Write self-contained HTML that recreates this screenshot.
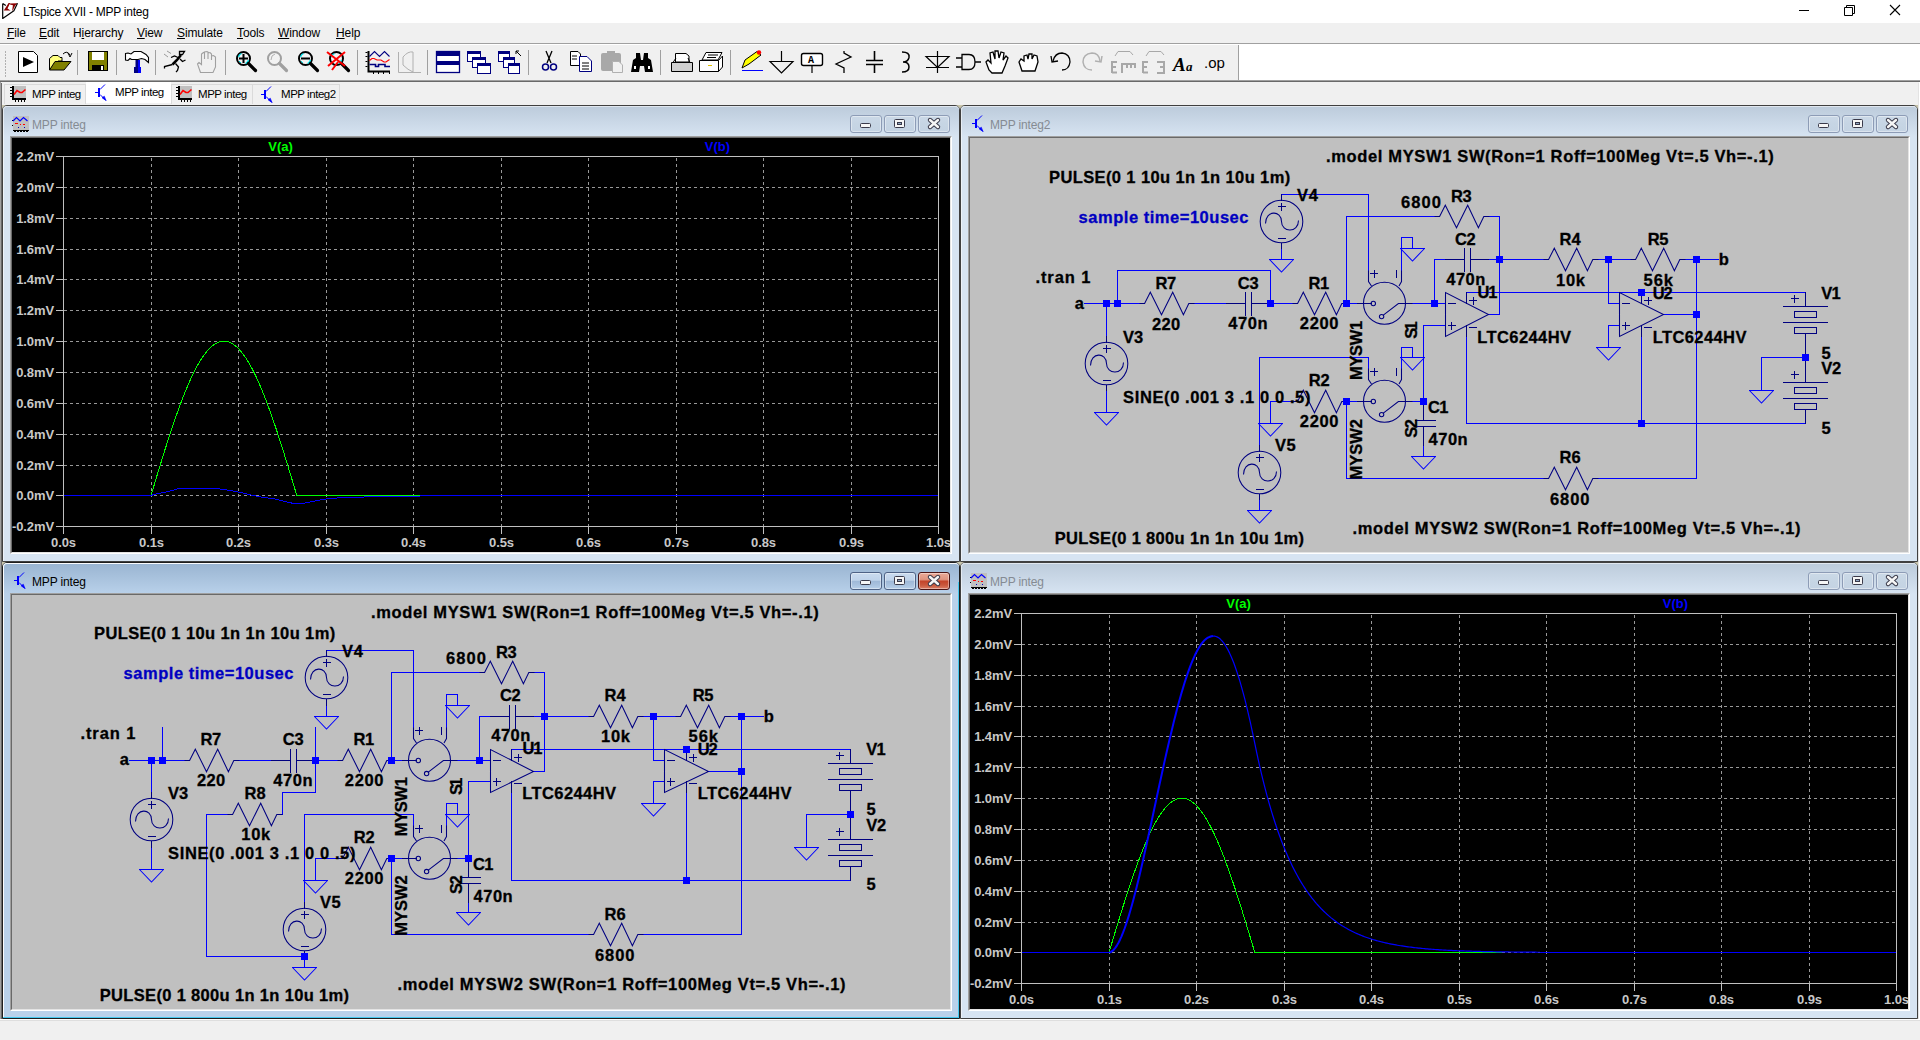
<!DOCTYPE html><html><head><meta charset="utf-8"><style>html,body{margin:0;padding:0;width:1920px;height:1040px;overflow:hidden;background:#f0f0f0;position:relative;font-family:"Liberation Sans",sans-serif}</style></head><body><div style="position:absolute;left:0;top:0;width:1920px;height:23px;background:#fff"></div><svg style="position:absolute;left:0;top:0" width="22" height="22"><path d="M8.6 3 L10.2 3 L7.5 8.6 L10.6 10.6 L3.8 10.6 Z" fill="#8b0000"/><path d="M10 3.6 L17.4 3.2 L15.2 5.6 L12.8 10.4 L12.2 10.4 L12.9 5.2 L10 4.6 Z" fill="#8b0000"/><path d="M2.7 3.4 V18.4 L13.9 10.7 L17.5 3.3 M2.7 3.6 L5.8 5.6" stroke="#000" stroke-width="1.2" fill="none" stroke-linejoin="round"/></svg><div style="position:absolute;left:23px;top:5px;font:12px 'Liberation Sans', sans-serif;color:#000;white-space:pre;letter-spacing:-0.25px">LTspice XVII - MPP integ</div><svg style="position:absolute;left:1790px;top:0" width="130" height="23"><path d="M9 10.5 H19" stroke="#000" stroke-width="1"/><path d="M54.5 7.5 H62.5 V15.5 H54.5 Z M56.5 7.5 V5.5 H64.5 V13.5 H62.5" stroke="#000" fill="none" stroke-width="1"/><path d="M100 5 L110 15 M110 5 L100 15" stroke="#000" stroke-width="1.1"/></svg><div style="position:absolute;left:0;top:23px;width:1920px;height:20px;background:#f0f0f0"></div><div style="position:absolute;left:7px;top:26px;font:12px 'Liberation Sans', sans-serif;color:#000;white-space:pre;letter-spacing:-0.1px"><u style="text-underline-offset:1px">F</u>ile</div><div style="position:absolute;left:39px;top:26px;font:12px 'Liberation Sans', sans-serif;color:#000;white-space:pre;letter-spacing:-0.1px"><u style="text-underline-offset:1px">E</u>dit</div><div style="position:absolute;left:73px;top:26px;font:12px 'Liberation Sans', sans-serif;color:#000;white-space:pre;letter-spacing:-0.1px">H<u style="text-underline-offset:1px">i</u>erarchy</div><div style="position:absolute;left:137px;top:26px;font:12px 'Liberation Sans', sans-serif;color:#000;white-space:pre;letter-spacing:-0.1px"><u style="text-underline-offset:1px">V</u>iew</div><div style="position:absolute;left:177px;top:26px;font:12px 'Liberation Sans', sans-serif;color:#000;white-space:pre;letter-spacing:-0.1px"><u style="text-underline-offset:1px">S</u>imulate</div><div style="position:absolute;left:237px;top:26px;font:12px 'Liberation Sans', sans-serif;color:#000;white-space:pre;letter-spacing:-0.1px"><u style="text-underline-offset:1px">T</u>ools</div><div style="position:absolute;left:278px;top:26px;font:12px 'Liberation Sans', sans-serif;color:#000;white-space:pre;letter-spacing:-0.1px"><u style="text-underline-offset:1px">W</u>indow</div><div style="position:absolute;left:336px;top:26px;font:12px 'Liberation Sans', sans-serif;color:#000;white-space:pre;letter-spacing:-0.1px"><u style="text-underline-offset:1px">H</u>elp</div><div style="position:absolute;left:0;top:43px;width:1920px;height:1px;background:#a0a0a0"></div><div style="position:absolute;left:0;top:44px;width:1920px;height:36px;background:#fff"></div><div style="position:absolute;left:0;top:45px;width:1238px;height:35px;background:#f0f0f0"></div><div style="position:absolute;left:1238px;top:45px;width:1px;height:35px;background:#a0a0a0"></div><div style="position:absolute;left:0;top:80px;width:1920px;height:1px;background:#a0a0a0"></div><div style="position:absolute;left:0;top:81px;width:1920px;height:1px;background:#696969"></div><svg style="position:absolute;left:0;top:0" width="1240" height="81"><rect x="5" y="51" width="1" height="2" fill="#b0b0b0"/><rect x="5" y="54" width="1" height="2" fill="#b0b0b0"/><rect x="5" y="57" width="1" height="2" fill="#b0b0b0"/><rect x="5" y="60" width="1" height="2" fill="#b0b0b0"/><rect x="5" y="63" width="1" height="2" fill="#b0b0b0"/><rect x="5" y="66" width="1" height="2" fill="#b0b0b0"/><rect x="5" y="69" width="1" height="2" fill="#b0b0b0"/><rect x="5" y="72" width="1" height="2" fill="#b0b0b0"/><rect x="5" y="75" width="1" height="2" fill="#b0b0b0"/><rect x="77" y="50" width="1" height="25" fill="#a0a0a0"/><rect x="116" y="50" width="1" height="25" fill="#a0a0a0"/><rect x="155" y="50" width="1" height="25" fill="#a0a0a0"/><rect x="225" y="50" width="1" height="25" fill="#a0a0a0"/><rect x="357" y="50" width="1" height="25" fill="#a0a0a0"/><rect x="427" y="50" width="1" height="25" fill="#a0a0a0"/><rect x="528" y="50" width="1" height="25" fill="#a0a0a0"/><rect x="660" y="50" width="1" height="25" fill="#a0a0a0"/><rect x="730" y="50" width="1" height="25" fill="#a0a0a0"/><path d="M18.5 51.5 H33.5 L37.5 55.5 V72.5 H18.5 Z" fill="#fff" stroke="#000"/><path d="M23 57 L34 62 L23 67 Z" fill="#000"/><path d="M49.5 58.5 L53 55.5 H58 L60 57.5 H62 V61 H58 L49.5 70 Z" fill="#ffff80" stroke="#000"/><path d="M49.5 70 L55 61.5 H71 L64 70 Z" fill="#808000" stroke="#000"/><path d="M63 54 Q67 50 70 55" stroke="#000" fill="none"/><path d="M68 53 L70 57 L72 53" stroke="#000" fill="none"/><rect x="88.5" y="51.5" width="19" height="19" fill="#808000" stroke="#000"/><rect x="92" y="52" width="12" height="8" fill="#fff"/><rect x="92" y="65" width="12" height="6" fill="#000"/><rect x="101" y="66" width="2" height="4" fill="#fff"/><path d="M125.5 53.5 L128 53 L131 54 L134 51.5 L141 51.5 L146 54.5 L148.5 57.5 L148.5 62.5 L145 59.5 L141.5 58.5 L138 59.5 L131.5 59.5 L130 58.5 L128 60.5 L125.5 60 Z" fill="#fff" stroke="#000" stroke-width="1.1"/><rect x="135.5" y="60" width="2.5" height="7" fill="#000080"/><rect x="138" y="60" width="2" height="7" fill="#0000ff"/><rect x="134" y="67" width="4" height="6" fill="#000080"/><rect x="138" y="67" width="3" height="6" fill="#0000ff"/><path d="M179.5 51.5 H184.5 L182.5 54.5 H179.5 Z" fill="#fff" stroke="#000" stroke-width="1.3"/><path d="M181 55 L177 60 L172.5 64.5" stroke="#000" stroke-width="2.6" fill="none"/><path d="M178 57.5 L174.5 56 L171 57.5 M180 59 L182.5 61.5 L185.5 60 M172.5 64.5 L164.5 66.5 V68.5 M175.5 63.5 L178.5 67 L177.5 70.5 L176 72" stroke="#000" stroke-width="1.3" fill="none"/><path d="M164 54 L168 57 M167 51 L171 53.5" stroke="#909090" stroke-width="0.9"/><path d="M200.5 72.5 L197.5 64 L199 62.5 L201.5 64.5 V54 L203.5 52.5 L204.5 53 V59 V52 L207 51.5 L208 52 V59 V53 L210 52.5 L211.5 54 V60 V56 L213.5 55.5 L215.5 57 V67 L213 72.5 Z" fill="#f0f0f0" stroke="#a0a0a0" stroke-width="1.1"/><circle cx="243.5" cy="58.5" r="6.5" fill="#f2f2f2" stroke="#000" stroke-width="2"/><path d="M238.5 57.0 A5 5 0 0 1 241.5 53.5" stroke="#00e8f0" stroke-width="1.3" fill="none"/><path d="M248.5 60.0 A5 5 0 0 1 245.5 63.5" stroke="#00e8f0" stroke-width="1.3" fill="none"/><path d="M248.5 63.5 L255.5 70.5" stroke="#000" stroke-width="3.2" stroke-linecap="round"/><path d="M239 58.5 H248 M243.5 54 V63" stroke="#000" stroke-width="2"/><path d="M239 61 L241 63" stroke="#00e0e0"/><circle cx="274.5" cy="58.5" r="6.5" fill="#f2f2f2" stroke="#a0a0a0" stroke-width="2"/><path d="M279.5 63.5 L286.5 70.5" stroke="#a0a0a0" stroke-width="3.2" stroke-linecap="round"/><path d="M271 60 Q271 55 275 54" stroke="#b0b0b0" fill="none"/><circle cx="305.5" cy="58.5" r="6.5" fill="#f2f2f2" stroke="#000" stroke-width="2"/><path d="M300.5 57.0 A5 5 0 0 1 303.5 53.5" stroke="#00e8f0" stroke-width="1.3" fill="none"/><path d="M310.5 60.0 A5 5 0 0 1 307.5 63.5" stroke="#00e8f0" stroke-width="1.3" fill="none"/><path d="M310.5 63.5 L317.5 70.5" stroke="#000" stroke-width="3.2" stroke-linecap="round"/><path d="M301 58.5 H310" stroke="#000" stroke-width="2"/><path d="M301 61 L303 63" stroke="#00e0e0"/><circle cx="336.5" cy="58.5" r="6.5" fill="#f2f2f2" stroke="#000" stroke-width="2"/><path d="M331.5 57.0 A5 5 0 0 1 334.5 53.5" stroke="#00e8f0" stroke-width="1.3" fill="none"/><path d="M341.5 60.0 A5 5 0 0 1 338.5 63.5" stroke="#00e8f0" stroke-width="1.3" fill="none"/><path d="M341.5 63.5 L348.5 70.5" stroke="#000" stroke-width="3.2" stroke-linecap="round"/><path d="M327 52 L345 66 M345 52 L328 66 M332 70 L338 62" stroke="#ff0000" stroke-width="2"/><path d="M368.5 51 V71.5 H390" stroke="#000" stroke-width="2" fill="none"/><rect x="365.5" y="52" width="2" height="1" fill="#000"/><rect x="365.5" y="56" width="2" height="1" fill="#000"/><rect x="365.5" y="61" width="2" height="1" fill="#000"/><rect x="365.5" y="66" width="2" height="1" fill="#000"/><rect x="373" y="72" width="1" height="2" fill="#000"/><rect x="378" y="72" width="1" height="2" fill="#000"/><rect x="383" y="72" width="1" height="2" fill="#000"/><rect x="389" y="72" width="1" height="2" fill="#000"/><path d="M369.5 56.5 L374.5 51.5 L379.5 56.5 L384.5 51.5 L389.5 56.5" stroke="#000080" stroke-width="1.1" fill="none"/><path d="M369.5 60.5 L372 58.5 L374 58.5 L377 60 L381 60 L384 62 L386 62 L389.5 59.5" stroke="#ff0000" stroke-width="1.1" fill="none"/><path d="M369.5 64.5 H375.5 V66.5 H378.5 V64.5 H385 V66.5 H390" stroke="#000080" stroke-width="1.6" fill="none"/><path d="M398.5 52 V72.5 H421" stroke="#b0b0b0" fill="none"/><path d="M403 57 Q408 51 413 52 L413 72 Q408 70 403 65 Z" stroke="#b0b0b0" fill="none"/><rect x="436.5" y="51.5" width="23" height="21" fill="#fff" stroke="#000080" stroke-width="1.3"/><rect x="437" y="52" width="22" height="4" fill="#000080"/><rect x="437" y="61" width="22" height="4" fill="#000080"/><rect x="467.5" y="51.5" width="13" height="10" fill="#fff" stroke="#000080"/><rect x="467" y="51" width="14" height="3" fill="#000080"/><rect x="472.5" y="57.5" width="13" height="10" fill="#fff" stroke="#000080"/><rect x="472" y="57" width="14" height="3" fill="#000080"/><rect x="477.5" y="63.5" width="13" height="10" fill="#fff" stroke="#000080"/><rect x="477" y="63" width="14" height="3" fill="#000080"/><rect x="498.5" y="51.5" width="11" height="10" fill="#fff" stroke="#000080"/><rect x="498" y="51" width="12" height="3" fill="#000080"/><rect x="503.5" y="57.5" width="11" height="10" fill="#fff" stroke="#000080"/><rect x="503" y="57" width="12" height="3" fill="#000080"/><rect x="508.5" y="63.5" width="11" height="10" fill="#fff" stroke="#000080"/><rect x="508" y="63" width="12" height="3" fill="#000080"/><path d="M516 51 L521 56 M516 51 V54 M516 51 H519" stroke="#000" fill="none"/><path d="M546 51 L551 63 M552 51 L547 63" stroke="#000" stroke-width="1.3"/><circle cx="545.5" cy="67" r="3" fill="none" stroke="#000080" stroke-width="1.5"/><circle cx="553.5" cy="67" r="3" fill="none" stroke="#000080" stroke-width="1.5"/><path d="M570.5 51.5 H578 L580.5 54 V65.5 H570.5 Z" fill="#fff" stroke="#000"/><path d="M579.5 56.5 H587 L591.5 61 V71.5 H579.5 Z" fill="#fff" stroke="#000080"/><path d="M572 56 H577 M572 59 H577 M582 63 H589 M582 66 H589 M582 69 H589" stroke="#000"/><rect x="601" y="53" width="20" height="18" rx="2" fill="#a8a8a8"/><rect x="607" y="51" width="8" height="3" fill="#a8a8a8"/><path d="M612.5 61.5 H619 L622.5 65 V72.5 H612.5 Z" fill="#f0f0f0" stroke="#b0b0b0"/><path d="M631 72 L633 60 L636 58 L636 53 L640 53 L641 60 L643 60 L644 53 L648 53 L648 58 L651 60 L653 72 L645 72 L644 66 L640 66 L639 72 Z" fill="#000"/><rect x="634" y="66" width="2" height="3" fill="#fff"/><rect x="648" y="66" width="2" height="3" fill="#fff"/><path d="M675.5 53.5 H686 L689 56 V62 H675.5 Z" fill="#fff" stroke="#000"/><path d="M671.5 62.5 H692.5 V71.5 H671.5 Z" fill="#d0d0d0" stroke="#000"/><path d="M673 62.5 L676 58 M690 62.5 L688 58" stroke="#000"/><path d="M702 60 L706 52.5 H722 L718 60 Z" fill="#fff" stroke="#000"/><path d="M708 55 H718 M707 57.5 H716" stroke="#000"/><path d="M699.5 60.5 H718.5 L722.5 56 V67 L718.5 71.5 H699.5 Z M718.5 60.5 V71.5" fill="#fff" stroke="#000"/><rect x="708" y="65" width="4" height="1" fill="#e0c000"/><path d="M742 68 L745 60 L757 51.5 L761 55 L749 64 Z" fill="#ffff00" stroke="#000"/><circle cx="759" cy="52.5" r="2.2" fill="#ff0000"/><path d="M742 70.5 H763" stroke="#0000ff"/><path d="M781.5 51 V61 M770 61.5 H793 L781.5 73 Z" stroke="#000" stroke-width="1.2" fill="none"/><rect x="801.5" y="53.5" width="21" height="12" rx="2" fill="#fff" stroke="#000" stroke-width="1.4"/><path d="M812 65 V73" stroke="#000" stroke-width="1.2"/><text x="808" y="63" font-family="Liberation Mono" font-weight="bold" font-size="10" fill="#000">A</text><path d="M844 51 V53 L851 57 L836 64 L844 68 V73" stroke="#000" stroke-width="1.3" fill="none"/><path d="M874.5 51 V60 M866 60.5 H883 M866 64.5 H883 M874.5 65 V73" stroke="#000" stroke-width="1.6" fill="none"/><path d="M902 52 Q910 52 909 57.5 Q908 62 903 62 Q909 62 909 67 Q909 72 902 72" stroke="#000" stroke-width="1.5" fill="none"/><path d="M937.5 51 V73 M926 56.5 H949 L937.5 67.5 Z M926 67.5 H949" stroke="#000" stroke-width="1.2" fill="none"/><path d="M956 58 H962 M956 67 H962 M962 54.5 H969 Q975 54.5 975 62 Q975 69.5 969 69.5 H962 Z M975 62 H981" stroke="#000" stroke-width="1.3" fill="none"/><path d="M989 70 L986 62 L988 60 L991 63 L990 53 L993 52 L995 59 L995 51 L998 51 L999 58 L1001 52 L1004 53 L1003 60 L1006 56 L1008 58 L1005 66 L1002 73 L992 73 Z" fill="#fff" stroke="#000" stroke-width="1.3"/><path d="M1022 71 L1019 62 L1021 59 L1024 61 L1024 56 L1027 55 L1028 59 L1029 54 L1032 54 L1032 59 L1034 55 L1037 56 L1038 62 L1035 71 Z" fill="#fff" stroke="#000" stroke-width="1.3"/><path d="M1053 61 Q1055 53 1062 53 Q1070 54 1070 62 Q1069 70 1062 70" stroke="#000" stroke-width="1.3" fill="none"/><path d="M1051 56 L1052 62 L1058 61" stroke="#000" stroke-width="1.3" fill="none"/><path d="M1100 61 Q1099 53 1092 53 Q1083 54 1083 62 Q1084 70 1092 70" stroke="#b0b0b0" stroke-width="1.5" fill="none"/><path d="M1102 56 L1101 62 L1095 61" stroke="#b0b0b0" stroke-width="1.5" fill="none"/><path d="M1112 73 V62 H1117 M1112 67 H1116 M1112 72.5 H1117 M1122 73 V64 H1135 V68 M1127 64 V68 M1131 64 V68" stroke="#a8a8a8" stroke-width="2" fill="none"/><path d="M1115 56 L1118 51.5 H1130 L1133 55" stroke="#a8a8a8" fill="none"/><path d="M1143 73 V62 H1148 M1143 67 H1147 M1143 72.5 H1148 M1157 62 H1164 V73 H1157 M1160 67 H1164" stroke="#a8a8a8" stroke-width="2" fill="none"/><path d="M1146 56 L1149 51.5 H1161 L1164 55" stroke="#a8a8a8" fill="none"/><text x="1173" y="71" font-family="Liberation Serif" font-style="italic" font-weight="bold" font-size="19" fill="#000">A</text><text x="1186" y="71" font-family="Liberation Serif" font-style="italic" font-weight="bold" font-size="13" fill="#000">a</text><text x="1204" y="68" font-family="Liberation Sans" font-size="15" fill="#000">.op</text></svg><div style="position:absolute;left:0;top:82px;width:1920px;height:23px;background:#f0f0f0"></div><div style="position:absolute;left:4px;top:84px;width:80px;height:19px;border:1px solid #dadada;border-bottom:none;background:#f0f0f0"></div><div style="position:absolute;left:86px;top:82px;width:85px;height:21px;background:#fff"></div><div style="position:absolute;left:171px;top:84px;width:80px;height:19px;border:1px solid #dadada;border-bottom:none;background:#f0f0f0"></div><div style="position:absolute;left:252px;top:84px;width:86px;height:19px;border:1px solid #dadada;border-bottom:none;background:#f0f0f0"></div><svg style="position:absolute;left:10px;top:86px" width="18" height="17" shape-rendering="crispEdges"><rect x="4" y="0" width="12" height="12" fill="#c0c0c0"/><rect x="2" y="0" width="2" height="14" fill="#000"/><rect x="2" y="12" width="14" height="2" fill="#000"/><rect x="0" y="1" width="2" height="1" fill="#000"/><rect x="0" y="4" width="2" height="1" fill="#000"/><rect x="0" y="7" width="2" height="1" fill="#000"/><rect x="0" y="10" width="2" height="1" fill="#000"/><rect x="5" y="14" width="1" height="2" fill="#000"/><rect x="8" y="14" width="1" height="2" fill="#000"/><rect x="11" y="14" width="1" height="2" fill="#000"/><rect x="14" y="14" width="1" height="2" fill="#000"/></svg><svg style="position:absolute;left:10px;top:86px" width="18" height="17"><path d="M4 8.5 L7 4.5 L10 6.5 L12 6.5 L15.5 3.5" stroke="#ff0000" stroke-width="1.6" fill="none"/></svg><svg style="position:absolute;left:95px;top:84px" width="14" height="18" shape-rendering="crispEdges"><rect x="0" y="8" width="3" height="1" fill="#0000ff"/><rect x="3" y="4" width="2" height="9" fill="#0000ff"/></svg><svg style="position:absolute;left:95px;top:84px" width="14" height="18"><path d="M5 5.5 L10 0.5" stroke="#0000ff" stroke-width="1"/><path d="M5 10.5 L11 16.5" stroke="#0000ff" stroke-width="1"/><path d="M7 13.8 L11 16.5 L9.3 12.2 Z" fill="#0000ff" stroke="#0000ff" stroke-width="0.6"/></svg><svg style="position:absolute;left:176px;top:86px" width="18" height="17" shape-rendering="crispEdges"><rect x="4" y="0" width="12" height="12" fill="#c0c0c0"/><rect x="2" y="0" width="2" height="14" fill="#000"/><rect x="2" y="12" width="14" height="2" fill="#000"/><rect x="0" y="1" width="2" height="1" fill="#000"/><rect x="0" y="4" width="2" height="1" fill="#000"/><rect x="0" y="7" width="2" height="1" fill="#000"/><rect x="0" y="10" width="2" height="1" fill="#000"/><rect x="5" y="14" width="1" height="2" fill="#000"/><rect x="8" y="14" width="1" height="2" fill="#000"/><rect x="11" y="14" width="1" height="2" fill="#000"/><rect x="14" y="14" width="1" height="2" fill="#000"/></svg><svg style="position:absolute;left:176px;top:86px" width="18" height="17"><path d="M4 8.5 L7 4.5 L10 6.5 L12 6.5 L15.5 3.5" stroke="#ff0000" stroke-width="1.6" fill="none"/></svg><svg style="position:absolute;left:261px;top:86px" width="14" height="18" shape-rendering="crispEdges"><rect x="0" y="8" width="3" height="1" fill="#0000ff"/><rect x="3" y="4" width="2" height="9" fill="#0000ff"/></svg><svg style="position:absolute;left:261px;top:86px" width="14" height="18"><path d="M5 5.5 L10 0.5" stroke="#0000ff" stroke-width="1"/><path d="M5 10.5 L11 16.5" stroke="#0000ff" stroke-width="1"/><path d="M7 13.8 L11 16.5 L9.3 12.2 Z" fill="#0000ff" stroke="#0000ff" stroke-width="0.6"/></svg><div style="position:absolute;left:32px;top:88px;font:11.5px 'Liberation Sans', sans-serif;color:#000;white-space:pre;letter-spacing:-0.45px">MPP integ</div><div style="position:absolute;left:115px;top:86px;font:11.5px 'Liberation Sans', sans-serif;color:#000;white-space:pre;letter-spacing:-0.45px">MPP integ</div><div style="position:absolute;left:198px;top:88px;font:11.5px 'Liberation Sans', sans-serif;color:#000;white-space:pre;letter-spacing:-0.45px">MPP integ</div><div style="position:absolute;left:281px;top:88px;font:11.5px 'Liberation Sans', sans-serif;color:#000;white-space:pre;letter-spacing:-0.45px">MPP integ2</div><div style="position:absolute;left:2px;top:105px;width:1916px;height:914px;background:#c9c5ab"></div><div style="position:absolute;left:0;top:82px;width:1px;height:937px;background:#a0a0a0"></div><div style="position:absolute;left:1px;top:83px;width:1px;height:936px;background:#696969"></div><div style="position:absolute;left:1918px;top:83px;width:1px;height:936px;background:#e3e3e3"></div><div style="position:absolute;left:1919px;top:82px;width:1px;height:937px;background:#fff"></div><div style="position:absolute;left:2px;top:105px;width:958px;height:457px;overflow:hidden"><div style="position:absolute;left:0;top:0;width:956px;height:455px;border:1px solid #404040;border-radius:5px 5px 0 0;background:#d7e4f2"></div><div style="position:absolute;left:1px;top:1px;width:956px;height:31px;border-radius:4px 4px 0 0;background:linear-gradient(#bccbdb,#d7e4f2)"></div><div style="position:absolute;left:1px;top:1px;width:955px;height:454px;border-left:1px solid rgba(255,255,255,0.55);border-top:1px solid rgba(255,255,255,0.55);border-radius:4px 4px 0 0"></div><svg style="position:absolute;left:10px;top:11px" width="17" height="17" shape-rendering="crispEdges"><rect x="1" y="0" width="16" height="15" fill="#c0c0c0"/><rect x="3" y="7" width="3" height="1" fill="#ff0000"/><rect x="8" y="8" width="1" height="1" fill="#ff0000"/><rect x="11" y="8" width="2" height="1" fill="#ff0000"/><rect x="0" y="4" width="1" height="1" fill="#000"/><rect x="0" y="9" width="1" height="1" fill="#000"/><rect x="6" y="11" width="1" height="1" fill="#0000c0"/><rect x="12" y="11" width="1" height="1" fill="#0000c0"/><rect x="1" y="14" width="16" height="1" fill="#000"/><rect x="2" y="15" width="2" height="1" fill="#000"/><rect x="5" y="15" width="2" height="1" fill="#000"/><rect x="8" y="15" width="2" height="1" fill="#000"/><rect x="11" y="15" width="2" height="1" fill="#000"/><rect x="14" y="15" width="2" height="1" fill="#000"/></svg><svg style="position:absolute;left:10px;top:11px" width="17" height="17"><path d="M1 5 L4.5 1.5 L8 5 L11.5 1.5 L15.5 5" stroke="#0000ff" stroke-width="1.2" fill="none"/></svg><div style="position:absolute;left:30px;top:13px;font:12px 'Liberation Sans', sans-serif;color:#858b93;white-space:pre;letter-spacing:-0.15px">MPP integ</div><div style="position:absolute;left:848px;top:10px;width:30px;height:16px;border:1px solid #8d9cb6;border-radius:3px;background:linear-gradient(#cbd9e7 0%, #c6d5e4 50%, #c4d3e3 100%);box-shadow:inset 0 0 0 1px rgba(255,255,255,0.4)"></div><div style="position:absolute;left:882px;top:10px;width:30px;height:16px;border:1px solid #8d9cb6;border-radius:3px;background:linear-gradient(#cbd9e7 0%, #c6d5e4 50%, #c4d3e3 100%);box-shadow:inset 0 0 0 1px rgba(255,255,255,0.4)"></div><div style="position:absolute;left:916px;top:10px;width:30px;height:16px;border:1px solid #8d9cb6;border-radius:3px;background:linear-gradient(#cbd9e7 0%, #c6d5e4 50%, #c4d3e3 100%);box-shadow:inset 0 0 0 1px rgba(255,255,255,0.4)"></div><svg style="position:absolute;left:0;top:0" width="958" height="32"><rect x="858.5" y="18.5" width="10" height="4" rx="1" fill="#f6f6f6" stroke="#3a3a4a"/><rect x="892.5" y="14.5" width="10" height="8" rx="1" fill="#f6f6f6" stroke="#3a3a4a"/><rect x="895.5" y="17.5" width="4" height="2" fill="#8ea5c2" stroke="#3a3a4a"/><path d="M928 15.0 L936 22.0 M936 15.0 L928 22.0" stroke="#3a3a4a" stroke-width="4.4" stroke-linecap="round"/><path d="M928 15.0 L936 22.0 M936 15.0 L928 22.0" stroke="#f6f6f6" stroke-width="2.4" stroke-linecap="round"/></svg><div style="position:absolute;left:8px;top:31px;width:940px;height:416px;border-top:1px solid #a0a0a0;border-left:1px solid #a0a0a0;border-right:1px solid #fff;border-bottom:1px solid #fff"></div><div style="position:absolute;left:9px;top:32px;width:938px;height:414px;border-top:1px solid #696969;border-left:1px solid #696969;border-right:1px solid #e3e3e3;border-bottom:1px solid #e3e3e3"></div><div style="position:absolute;left:10px;top:33px;width:938px;height:414px;overflow:hidden"><svg style="position:absolute;left:0;top:0" width="938" height="414"><rect width="938" height="414" fill="#000"/><g shape-rendering="crispEdges"><line x1="52" y1="49.5" x2="926" y2="49.5" stroke="#989898" stroke-dasharray="3 3"/><line x1="52" y1="80.5" x2="926" y2="80.5" stroke="#989898" stroke-dasharray="3 3"/><line x1="52" y1="111.5" x2="926" y2="111.5" stroke="#989898" stroke-dasharray="3 3"/><line x1="52" y1="141.5" x2="926" y2="141.5" stroke="#989898" stroke-dasharray="3 3"/><line x1="52" y1="172.5" x2="926" y2="172.5" stroke="#989898" stroke-dasharray="3 3"/><line x1="52" y1="203.5" x2="926" y2="203.5" stroke="#989898" stroke-dasharray="3 3"/><line x1="52" y1="234.5" x2="926" y2="234.5" stroke="#989898" stroke-dasharray="3 3"/><line x1="52" y1="265.5" x2="926" y2="265.5" stroke="#989898" stroke-dasharray="3 3"/><line x1="52" y1="296.5" x2="926" y2="296.5" stroke="#989898" stroke-dasharray="3 3"/><line x1="52" y1="327.5" x2="926" y2="327.5" stroke="#989898" stroke-dasharray="3 3"/><line x1="52" y1="357.5" x2="926" y2="357.5" stroke="#989898" stroke-dasharray="3 3"/><line x1="139.5" y1="20" x2="139.5" y2="388" stroke="#989898" stroke-dasharray="3 3"/><line x1="226.5" y1="20" x2="226.5" y2="388" stroke="#989898" stroke-dasharray="3 3"/><line x1="314.5" y1="20" x2="314.5" y2="388" stroke="#989898" stroke-dasharray="3 3"/><line x1="401.5" y1="20" x2="401.5" y2="388" stroke="#989898" stroke-dasharray="3 3"/><line x1="489.5" y1="20" x2="489.5" y2="388" stroke="#989898" stroke-dasharray="3 3"/><line x1="576.5" y1="20" x2="576.5" y2="388" stroke="#989898" stroke-dasharray="3 3"/><line x1="664.5" y1="20" x2="664.5" y2="388" stroke="#989898" stroke-dasharray="3 3"/><line x1="751.5" y1="20" x2="751.5" y2="388" stroke="#989898" stroke-dasharray="3 3"/><line x1="839.5" y1="20" x2="839.5" y2="388" stroke="#989898" stroke-dasharray="3 3"/><rect x="51.5" y="18.5" width="875" height="370" fill="none" stroke="#c0c0c0"/><line x1="44" y1="18.5" x2="51" y2="18.5" stroke="#c0c0c0"/><line x1="44" y1="49.5" x2="51" y2="49.5" stroke="#c0c0c0"/><line x1="44" y1="80.5" x2="51" y2="80.5" stroke="#c0c0c0"/><line x1="44" y1="111.5" x2="51" y2="111.5" stroke="#c0c0c0"/><line x1="44" y1="141.5" x2="51" y2="141.5" stroke="#c0c0c0"/><line x1="44" y1="172.5" x2="51" y2="172.5" stroke="#c0c0c0"/><line x1="44" y1="203.5" x2="51" y2="203.5" stroke="#c0c0c0"/><line x1="44" y1="234.5" x2="51" y2="234.5" stroke="#c0c0c0"/><line x1="44" y1="265.5" x2="51" y2="265.5" stroke="#c0c0c0"/><line x1="44" y1="296.5" x2="51" y2="296.5" stroke="#c0c0c0"/><line x1="44" y1="327.5" x2="51" y2="327.5" stroke="#c0c0c0"/><line x1="44" y1="357.5" x2="51" y2="357.5" stroke="#c0c0c0"/><line x1="44" y1="388.5" x2="51" y2="388.5" stroke="#c0c0c0"/><line x1="51.5" y1="388" x2="51.5" y2="396" stroke="#c0c0c0"/><line x1="139.5" y1="388" x2="139.5" y2="396" stroke="#c0c0c0"/><line x1="226.5" y1="388" x2="226.5" y2="396" stroke="#c0c0c0"/><line x1="314.5" y1="388" x2="314.5" y2="396" stroke="#c0c0c0"/><line x1="401.5" y1="388" x2="401.5" y2="396" stroke="#c0c0c0"/><line x1="489.5" y1="388" x2="489.5" y2="396" stroke="#c0c0c0"/><line x1="576.5" y1="388" x2="576.5" y2="396" stroke="#c0c0c0"/><line x1="664.5" y1="388" x2="664.5" y2="396" stroke="#c0c0c0"/><line x1="751.5" y1="388" x2="751.5" y2="396" stroke="#c0c0c0"/><line x1="839.5" y1="388" x2="839.5" y2="396" stroke="#c0c0c0"/><line x1="926.5" y1="388" x2="926.5" y2="396" stroke="#c0c0c0"/></g><text x="42" y="23" text-anchor="end" font-family="Liberation Sans" font-weight="bold" font-size="13" fill="#c8c8c8" letter-spacing="-0.1">2.2mV</text><text x="42" y="54" text-anchor="end" font-family="Liberation Sans" font-weight="bold" font-size="13" fill="#c8c8c8" letter-spacing="-0.1">2.0mV</text><text x="42" y="85" text-anchor="end" font-family="Liberation Sans" font-weight="bold" font-size="13" fill="#c8c8c8" letter-spacing="-0.1">1.8mV</text><text x="42" y="116" text-anchor="end" font-family="Liberation Sans" font-weight="bold" font-size="13" fill="#c8c8c8" letter-spacing="-0.1">1.6mV</text><text x="42" y="146" text-anchor="end" font-family="Liberation Sans" font-weight="bold" font-size="13" fill="#c8c8c8" letter-spacing="-0.1">1.4mV</text><text x="42" y="177" text-anchor="end" font-family="Liberation Sans" font-weight="bold" font-size="13" fill="#c8c8c8" letter-spacing="-0.1">1.2mV</text><text x="42" y="208" text-anchor="end" font-family="Liberation Sans" font-weight="bold" font-size="13" fill="#c8c8c8" letter-spacing="-0.1">1.0mV</text><text x="42" y="239" text-anchor="end" font-family="Liberation Sans" font-weight="bold" font-size="13" fill="#c8c8c8" letter-spacing="-0.1">0.8mV</text><text x="42" y="270" text-anchor="end" font-family="Liberation Sans" font-weight="bold" font-size="13" fill="#c8c8c8" letter-spacing="-0.1">0.6mV</text><text x="42" y="301" text-anchor="end" font-family="Liberation Sans" font-weight="bold" font-size="13" fill="#c8c8c8" letter-spacing="-0.1">0.4mV</text><text x="42" y="332" text-anchor="end" font-family="Liberation Sans" font-weight="bold" font-size="13" fill="#c8c8c8" letter-spacing="-0.1">0.2mV</text><text x="42" y="362" text-anchor="end" font-family="Liberation Sans" font-weight="bold" font-size="13" fill="#c8c8c8" letter-spacing="-0.1">0.0mV</text><text x="42" y="393" text-anchor="end" font-family="Liberation Sans" font-weight="bold" font-size="13" fill="#c8c8c8" letter-spacing="-0.1">-0.2mV</text><text x="51.5" y="409" text-anchor="middle" font-family="Liberation Sans" font-weight="bold" font-size="13" fill="#c8c8c8" letter-spacing="-0.1">0.0s</text><text x="139.5" y="409" text-anchor="middle" font-family="Liberation Sans" font-weight="bold" font-size="13" fill="#c8c8c8" letter-spacing="-0.1">0.1s</text><text x="226.5" y="409" text-anchor="middle" font-family="Liberation Sans" font-weight="bold" font-size="13" fill="#c8c8c8" letter-spacing="-0.1">0.2s</text><text x="314.5" y="409" text-anchor="middle" font-family="Liberation Sans" font-weight="bold" font-size="13" fill="#c8c8c8" letter-spacing="-0.1">0.3s</text><text x="401.5" y="409" text-anchor="middle" font-family="Liberation Sans" font-weight="bold" font-size="13" fill="#c8c8c8" letter-spacing="-0.1">0.4s</text><text x="489.5" y="409" text-anchor="middle" font-family="Liberation Sans" font-weight="bold" font-size="13" fill="#c8c8c8" letter-spacing="-0.1">0.5s</text><text x="576.5" y="409" text-anchor="middle" font-family="Liberation Sans" font-weight="bold" font-size="13" fill="#c8c8c8" letter-spacing="-0.1">0.6s</text><text x="664.5" y="409" text-anchor="middle" font-family="Liberation Sans" font-weight="bold" font-size="13" fill="#c8c8c8" letter-spacing="-0.1">0.7s</text><text x="751.5" y="409" text-anchor="middle" font-family="Liberation Sans" font-weight="bold" font-size="13" fill="#c8c8c8" letter-spacing="-0.1">0.8s</text><text x="839.5" y="409" text-anchor="middle" font-family="Liberation Sans" font-weight="bold" font-size="13" fill="#c8c8c8" letter-spacing="-0.1">0.9s</text><text x="926.5" y="409" text-anchor="middle" font-family="Liberation Sans" font-weight="bold" font-size="13" fill="#c8c8c8" letter-spacing="-0.1">1.0s</text><text x="268.5" y="13" text-anchor="middle" font-family="Liberation Sans" font-weight="bold" font-size="13" fill="#00ff00">V(a)</text><text x="705.5" y="13" text-anchor="middle" font-family="Liberation Sans" font-weight="bold" font-size="13" fill="#0000ff">V(b)</text><polyline points="51.50,357.50 139.00,357.50 140.82,351.44 142.65,345.39 144.47,339.36 146.29,333.35 148.11,327.38 149.94,321.46 151.76,315.60 153.58,309.80 155.41,304.07 157.23,298.42 159.05,292.87 160.88,287.42 162.70,282.07 164.52,276.84 166.34,271.73 168.17,266.76 169.99,261.93 171.81,257.24 173.64,252.71 175.46,248.34 177.28,244.14 179.10,240.11 180.93,236.27 182.75,232.61 184.57,229.14 186.40,225.87 188.22,222.81 190.04,219.95 191.86,217.31 193.69,214.88 195.51,212.67 197.33,210.68 199.16,208.92 200.98,207.39 202.80,206.09 204.62,205.03 206.45,204.20 208.27,203.60 210.09,203.24 211.92,203.12 213.74,203.24 215.56,203.60 217.39,204.20 219.21,205.03 221.03,206.09 222.85,207.39 224.68,208.92 226.50,210.68 228.32,212.67 230.15,214.88 231.97,217.31 233.79,219.95 235.61,222.81 237.44,225.87 239.26,229.14 241.08,232.61 242.91,236.27 244.73,240.11 246.55,244.14 248.38,248.34 250.20,252.71 252.02,257.24 253.84,261.93 255.67,266.76 257.49,271.73 259.31,276.84 261.14,282.07 262.96,287.42 264.78,292.87 266.60,298.42 268.43,304.07 270.25,309.80 272.07,315.60 273.90,321.46 275.72,327.38 277.54,333.35 279.36,339.36 281.19,345.39 283.01,351.44 284.83,357.50 284.83,357.50 408.24,357.50" fill="none" stroke="#00ff00" stroke-width="1" stroke-linejoin="round" shape-rendering="crispEdges"/><polyline points="51.50,357.50 139.50,357.50" fill="none" stroke="#0000ff" stroke-width="1" stroke-linejoin="round" shape-rendering="crispEdges"/><polyline points="139.50,357.30 139.95,357.18 140.52,357.02 141.19,356.83 141.96,356.62 142.80,356.40 143.69,356.17 144.63,355.93 145.60,355.70 146.63,355.47 147.77,355.23 148.97,354.98 150.22,354.73 151.49,354.47 152.74,354.22 153.96,353.96 155.10,353.70 156.20,353.44 157.29,353.16 158.36,352.88 159.41,352.59 160.42,352.32 161.40,352.06 162.33,351.82 163.20,351.60 163.93,351.41 164.48,351.23 164.94,351.07 165.38,350.93 165.89,350.80 166.54,350.69 167.42,350.59 168.60,350.50 170.12,350.43 171.90,350.38 173.90,350.34 176.04,350.32 178.29,350.31 180.56,350.30 182.82,350.30 185.00,350.30 187.19,350.30 189.49,350.30 191.83,350.31 194.18,350.32 196.48,350.34 198.66,350.38 200.69,350.43 202.50,350.50 204.06,350.59 205.41,350.70 206.59,350.82 207.67,350.95 208.69,351.10 209.72,351.25 210.80,351.42 212.00,351.60 213.31,351.79 214.67,352.01 216.07,352.23 217.49,352.47 218.89,352.71 220.26,352.95 221.57,353.18 222.80,353.40 223.94,353.61 225.01,353.80 226.04,354.00 227.02,354.19 227.98,354.38 228.94,354.58 229.91,354.78 230.90,355.00 231.89,355.23 232.86,355.47 233.81,355.72 234.78,355.97 235.76,356.23 236.78,356.48 237.85,356.74 239.00,357.00 240.21,357.26 241.47,357.52 242.77,357.78 244.11,358.05 245.50,358.32 246.93,358.58 248.39,358.84 249.90,359.10 251.47,359.35 253.12,359.58 254.83,359.81 256.57,360.04 258.32,360.27 260.06,360.53 261.76,360.80 263.40,361.10 265.03,361.45 266.68,361.85 268.34,362.27 269.96,362.71 271.53,363.14 273.01,363.55 274.38,363.91 275.60,364.20 276.63,364.43 277.47,364.62 278.18,364.77 278.82,364.89 279.43,364.99 280.08,365.07 280.82,365.14 281.70,365.20 282.72,365.26 283.82,365.31 284.99,365.35 286.20,365.38 287.44,365.38 288.70,365.35 289.96,365.29 291.20,365.20 292.44,365.06 293.70,364.88 294.97,364.66 296.25,364.42 297.53,364.16 298.80,363.90 300.06,363.64 301.30,363.40 302.52,363.16 303.72,362.91 304.91,362.66 306.09,362.41 307.26,362.16 308.44,361.92 309.62,361.70 310.80,361.50 311.97,361.32 313.11,361.16 314.24,361.02 315.38,360.88 316.54,360.76 317.74,360.64 318.98,360.52 320.30,360.40 321.65,360.28 322.99,360.16 324.37,360.05 325.79,359.94 327.29,359.84 328.89,359.74 330.62,359.66 332.50,359.60 334.70,359.55 337.28,359.52 340.07,359.51 342.91,359.50 345.66,359.50 348.17,359.50 350.26,359.50 351.80,359.50" fill="none" stroke="#0000ff" stroke-width="1" stroke-linejoin="round" shape-rendering="crispEdges"/><polyline points="351.80,358.50 407.80,358.50" fill="none" stroke="#0000ff" stroke-width="1" stroke-linejoin="round" shape-rendering="crispEdges"/><polyline points="407.80,357.50 926.00,357.50" fill="none" stroke="#0000ff" stroke-width="1" stroke-linejoin="round" shape-rendering="crispEdges"/></svg></div></div><div style="position:absolute;left:960px;top:105px;width:958px;height:457px;overflow:hidden"><div style="position:absolute;left:0;top:0;width:956px;height:455px;border:1px solid #404040;border-radius:5px 5px 0 0;background:#d7e4f2"></div><div style="position:absolute;left:1px;top:1px;width:956px;height:31px;border-radius:4px 4px 0 0;background:linear-gradient(#bccbdb,#d7e4f2)"></div><div style="position:absolute;left:1px;top:1px;width:955px;height:454px;border-left:1px solid rgba(255,255,255,0.55);border-top:1px solid rgba(255,255,255,0.55);border-radius:4px 4px 0 0"></div><svg style="position:absolute;left:12px;top:10px" width="14" height="18" shape-rendering="crispEdges"><rect x="0" y="8" width="3" height="1" fill="#0000ff"/><rect x="3" y="4" width="2" height="9" fill="#0000ff"/></svg><svg style="position:absolute;left:12px;top:10px" width="14" height="18"><path d="M5 5.5 L10 0.5" stroke="#0000ff" stroke-width="1"/><path d="M5 10.5 L11 16.5" stroke="#0000ff" stroke-width="1"/><path d="M7 13.8 L11 16.5 L9.3 12.2 Z" fill="#0000ff" stroke="#0000ff" stroke-width="0.6"/></svg><div style="position:absolute;left:30px;top:13px;font:12px 'Liberation Sans', sans-serif;color:#858b93;white-space:pre;letter-spacing:-0.15px">MPP integ2</div><div style="position:absolute;left:848px;top:10px;width:30px;height:16px;border:1px solid #8d9cb6;border-radius:3px;background:linear-gradient(#cbd9e7 0%, #c6d5e4 50%, #c4d3e3 100%);box-shadow:inset 0 0 0 1px rgba(255,255,255,0.4)"></div><div style="position:absolute;left:882px;top:10px;width:30px;height:16px;border:1px solid #8d9cb6;border-radius:3px;background:linear-gradient(#cbd9e7 0%, #c6d5e4 50%, #c4d3e3 100%);box-shadow:inset 0 0 0 1px rgba(255,255,255,0.4)"></div><div style="position:absolute;left:916px;top:10px;width:30px;height:16px;border:1px solid #8d9cb6;border-radius:3px;background:linear-gradient(#cbd9e7 0%, #c6d5e4 50%, #c4d3e3 100%);box-shadow:inset 0 0 0 1px rgba(255,255,255,0.4)"></div><svg style="position:absolute;left:0;top:0" width="958" height="32"><rect x="858.5" y="18.5" width="10" height="4" rx="1" fill="#f6f6f6" stroke="#3a3a4a"/><rect x="892.5" y="14.5" width="10" height="8" rx="1" fill="#f6f6f6" stroke="#3a3a4a"/><rect x="895.5" y="17.5" width="4" height="2" fill="#8ea5c2" stroke="#3a3a4a"/><path d="M928 15.0 L936 22.0 M936 15.0 L928 22.0" stroke="#3a3a4a" stroke-width="4.4" stroke-linecap="round"/><path d="M928 15.0 L936 22.0 M936 15.0 L928 22.0" stroke="#f6f6f6" stroke-width="2.4" stroke-linecap="round"/></svg><div style="position:absolute;left:8px;top:31px;width:940px;height:416px;border-top:1px solid #a0a0a0;border-left:1px solid #a0a0a0;border-right:1px solid #fff;border-bottom:1px solid #fff"></div><div style="position:absolute;left:9px;top:32px;width:938px;height:414px;border-top:1px solid #696969;border-left:1px solid #696969;border-right:1px solid #e3e3e3;border-bottom:1px solid #e3e3e3"></div><div style="position:absolute;left:10px;top:33px;width:938px;height:414px;overflow:hidden"><svg style="position:absolute;left:0;top:0" width="938" height="414" viewBox="970 138 938 414"><rect x="970" y="138" width="938" height="414" fill="#c0c0c0"/><path d="M1084.5 303.5 L1139.5 303.5 M1117.5 303.5 L1117.5 270.5 L1270.5 270.5 L1270.5 303.5 M1106.5 303.5 L1106.5 336.5 M1106.5 390.5 L1106.5 412.5 M1094.5 412.5 H1118.5 M1193.5 303.5 L1226.5 303.5 M1270.5 303.5 L1292.5 303.5 M1346.5 303.5 L1346.5 216.5 L1434.5 216.5 M1488.5 216.5 L1499.5 216.5 L1499.5 259.5 M1281.5 248.5 L1281.5 259.5 M1269.5 259.5 H1293.5 M1281.5 194.5 L1368.5 194.5 L1368.5 270.5 M1346.5 303.5 L1357.5 303.5 M1401.5 270.5 L1401.5 237.5 L1412.5 237.5 L1412.5 248.5 M1400.5 248.5 H1424.5 M1412.5 303.5 L1445.5 303.5 M1434.5 303.5 L1434.5 259.5 L1445.5 259.5 M1488.5 259.5 L1543.5 259.5 M1488.5 314.5 L1499.5 314.5 L1499.5 259.5 M1466.5 292.5 L1805.5 292.5 M1466.5 336.5 L1466.5 423.5 L1805.5 423.5 M1641.5 336.5 L1641.5 423.5 M1597.5 259.5 L1630.5 259.5 M1685.5 259.5 L1718.5 259.5 M1608.5 259.5 L1608.5 303.5 L1619.5 303.5 M1619.5 325.5 L1608.5 325.5 L1608.5 347.5 M1596.5 347.5 H1620.5 M1663.5 314.5 L1696.5 314.5 M1696.5 259.5 L1696.5 478.5 L1597.5 478.5 M1543.5 478.5 L1346.5 478.5 L1346.5 401.5 M1270.5 423.5 L1270.5 401.5 L1292.5 401.5 M1258.5 423.5 H1282.5 M1346.5 401.5 L1357.5 401.5 M1401.5 368.5 L1401.5 347.5 L1412.5 347.5 L1412.5 357.5 M1400.5 357.5 H1424.5 M1259.5 445.5 L1259.5 357.5 L1368.5 357.5 L1368.5 368.5 M1259.5 499.5 L1259.5 510.5 M1247.5 510.5 H1271.5 M1412.5 401.5 L1423.5 401.5 M1423.5 401.5 L1423.5 325.5 L1445.5 325.5 M1423.5 445.5 L1423.5 456.5 M1411.5 456.5 H1435.5 M1805.5 357.5 L1761.5 357.5 L1761.5 390.5 M1749.5 390.5 H1773.5" stroke="#0000ff" stroke-width="1" fill="none" stroke-linecap="square" shape-rendering="crispEdges"/><path d="M1106.5 336 V342 M1106.5 385.0 V390.5 M1103.5 348.5 H1110.5 M1106.5 345.0 V352.0 M1103.5 380.0 H1110.5 M1226.5 303.5 H1245.5 M1251.5 303.5 H1270.5 M1245.5 292 V315 M1251.5 292 V315 M1281.5 194 V200 M1281.5 243.0 V248.5 M1278.5 206.5 H1285.5 M1281.5 203.0 V210.0 M1278.5 238.0 H1285.5 M1357 303.5 H1371 M1370.5 273.5 H1377.5 M1374.0 270 V277 M1396.0 270 V277 M1445.5 259.5 H1464.5 M1470.5 259.5 H1488.5 M1464.5 248 V271 M1470.5 248 V271 M1448 303.5 H1455 M1448 325.5 H1455 M1451.5 322.0 V329.0 M1466.5 292.5 V303.5 M1466.5 325.5 V336.5 M1469.5 300.5 H1476.5 M1473.0 297.0 V304.0 M1469.5 327.5 H1476.5 M1622 303.5 H1629 M1622 325.5 H1629 M1625.5 322.0 V329.0 M1641.5 292.5 V303.5 M1641.5 325.5 V336.5 M1644.5 300.5 H1651.5 M1648.0 297.0 V304.0 M1644.5 327.5 H1651.5 M1357 401.5 H1371 M1370.5 371.5 H1377.5 M1374.0 368 V375 M1396.0 368 V375 M1259.5 445 V451 M1259.5 494.0 V499.5 M1256.5 457.5 H1263.5 M1259.5 454.0 V461.0 M1256.5 489.0 H1263.5 M1423.5 401.5 V420.5 M1423.5 426.5 V445.5 M1415 420.5 H1435 M1415 426.5 H1435 M1805.5 292.5 V306.5 M1783 306.5 H1827 M1783 322 H1827 M1794 311.5 H1816.5 V317 H1794 Z M1794 327.5 H1816.5 V333 H1794 Z M1805.5 333 V357.5 M1791 298.5 H1798 M1794.5 295 V302 M1805.5 357.5 V382.5 M1783 382.5 H1827 M1783 398 H1827 M1794 387.5 H1816.5 V393 H1794 Z M1794 403.5 H1816.5 V409 H1794 Z M1805.5 409 V423.5 M1791 374.5 H1798 M1794.5 371 V378" stroke="#000080" stroke-width="1" fill="none" stroke-linecap="square" shape-rendering="crispEdges"/><g stroke="#000080" stroke-width="1.05" fill="none"><circle cx="1106.5" cy="363.5" r="21.3"/><path d="M1090.5 365.5 C1090.5 352.0 1106.5 352.0 1106.5 363.5 C1106.5 375.0 1123.5 375.0 1123.5 362.5"/><path stroke="#0000ff" d="M1094.5 412.5 L1106.5 425.0 L1118.5 412.5"/><path d="M1139.5 303.5 L1144.6 303.5 L1150.3 292.2 L1161.5 314.8 L1172.7 292.2 L1183.4 314.8 L1188.8 303.5 L1194.5 303.5"/><path d="M1292.5 303.5 L1297.6 303.5 L1303.3 292.2 L1314.5 314.8 L1325.7 292.2 L1336.4 314.8 L1341.8 303.5 L1347.5 303.5"/><path d="M1434.5 216.5 L1439.6 216.5 L1445.3 205.2 L1456.5 227.8 L1467.7 205.2 L1478.4 227.8 L1483.8 216.5 L1489.5 216.5"/><circle cx="1281.5" cy="221.5" r="21.3"/><path d="M1265.5 223.5 C1265.5 210.0 1281.5 210.0 1281.5 221.5 C1281.5 233.0 1298.5 233.0 1298.5 220.5"/><path stroke="#0000ff" d="M1269.5 259.5 L1281.5 272.0 L1293.5 259.5"/><circle cx="1384.5" cy="303.3" r="21"/><circle cx="1373.3" cy="303.5" r="2.2"/><circle cx="1381.6" cy="316.6" r="2.2"/><path d="M1383.3 315.2 L1398.4 303.5 L1412.5 303.5"/><path d="M1368.5 270.5 V281.5 L1371.5 286"/><path d="M1401.5 270.5 V281.5 L1399.0 286"/><path stroke="#0000ff" d="M1400.5 248.5 L1412.5 261.0 L1424.5 248.5"/><path d="M1445.5 292.5 L1445.5 336.5 L1488.5 314.5 Z"/><path d="M1543.5 259.5 L1548.6 259.5 L1554.3 248.2 L1565.5 270.8 L1576.7 248.2 L1587.4 270.8 L1592.8 259.5 L1598.5 259.5"/><path d="M1630.5 259.5 L1635.6 259.5 L1641.3 248.2 L1652.5 270.8 L1663.7 248.2 L1674.4 270.8 L1679.8 259.5 L1685.5 259.5"/><path stroke="#0000ff" d="M1596.5 347.5 L1608.5 360.0 L1620.5 347.5"/><path d="M1619.5 292.5 L1619.5 336.5 L1663.5 314.5 Z"/><path d="M1543.5 478.5 L1548.6 478.5 L1554.3 467.2 L1565.5 489.8 L1576.7 467.2 L1587.4 489.8 L1592.8 478.5 L1598.5 478.5"/><path d="M1292.5 401.5 L1297.6 401.5 L1303.3 390.2 L1314.5 412.8 L1325.7 390.2 L1336.4 412.8 L1341.8 401.5 L1347.5 401.5"/><path stroke="#0000ff" d="M1258.5 423.5 L1270.5 436.0 L1282.5 423.5"/><circle cx="1384.5" cy="401.3" r="21"/><circle cx="1373.3" cy="401.5" r="2.2"/><circle cx="1381.6" cy="414.6" r="2.2"/><path d="M1383.3 413.2 L1398.4 401.5 L1412.5 401.5"/><path d="M1368.5 368.5 V379.5 L1371.5 384"/><path d="M1401.5 368.5 V379.5 L1399.0 384"/><path stroke="#0000ff" d="M1400.5 357.5 L1412.5 370.0 L1424.5 357.5"/><circle cx="1259.5" cy="472.5" r="21.3"/><path d="M1243.5 474.5 C1243.5 461.0 1259.5 461.0 1259.5 472.5 C1259.5 484.0 1276.5 484.0 1276.5 471.5"/><path stroke="#0000ff" d="M1247.5 510.5 L1259.5 523.0 L1271.5 510.5"/><path stroke="#0000ff" d="M1411.5 456.5 L1423.5 469.0 L1435.5 456.5"/><path stroke="#0000ff" d="M1749.5 390.5 L1761.5 403.0 L1773.5 390.5"/></g><g fill="#0000ff" shape-rendering="crispEdges"><rect x="1103" y="300" width="7" height="7"/><rect x="1114" y="300" width="7" height="7"/><rect x="1267" y="300" width="7" height="7"/><rect x="1343" y="300" width="7" height="7"/><rect x="1431" y="300" width="7" height="7"/><rect x="1496" y="256" width="7" height="7"/><rect x="1638" y="289" width="7" height="7"/><rect x="1638" y="420" width="7" height="7"/><rect x="1605" y="256" width="7" height="7"/><rect x="1693" y="256" width="7" height="7"/><rect x="1693" y="311" width="7" height="7"/><rect x="1343" y="398" width="7" height="7"/><rect x="1420" y="398" width="7" height="7"/><rect x="1802" y="354" width="7" height="7"/></g><text x="1326" y="161.5" text-anchor="start" font-family="Liberation Sans" font-weight="bold" font-size="16.5" fill="#000000" stroke="#000000" stroke-width="0.3" textLength="447.8" lengthAdjust="spacing">.model MYSW1 SW(Ron=1 Roff=100Meg Vt=.5 Vh=-.1)</text><text x="1049" y="182.7" text-anchor="start" font-family="Liberation Sans" font-weight="bold" font-size="16.5" fill="#000000" stroke="#000000" stroke-width="0.3" textLength="241.2" lengthAdjust="spacing">PULSE(0 1 10u 1n 1n 10u 1m)</text><text x="1078.6" y="222.7" text-anchor="start" font-family="Liberation Sans" font-weight="bold" font-size="16.5" fill="#0000c0" stroke="#0000c0" stroke-width="0.3" textLength="169.9" lengthAdjust="spacing">sample time=10usec</text><text x="1297" y="200.6" text-anchor="start" font-family="Liberation Sans" font-weight="bold" font-size="16.5" fill="#000000" stroke="#000000" stroke-width="0.3" textLength="21" lengthAdjust="spacing">V4</text><text x="1401" y="207.7" text-anchor="start" font-family="Liberation Sans" font-weight="bold" font-size="16.5" fill="#000000" stroke="#000000" stroke-width="0.3" textLength="40" lengthAdjust="spacing">6800</text><text x="1451" y="201.9" text-anchor="start" font-family="Liberation Sans" font-weight="bold" font-size="16.5" fill="#000000" stroke="#000000" stroke-width="0.3" textLength="20.7" lengthAdjust="spacing">R3</text><text x="1035.4" y="282.7" text-anchor="start" font-family="Liberation Sans" font-weight="bold" font-size="16.5" fill="#000000" stroke="#000000" stroke-width="0.3" textLength="55" lengthAdjust="spacing">.tran 1</text><text x="1074.8" y="309" text-anchor="start" font-family="Liberation Sans" font-weight="bold" font-size="16.5" fill="#000000" stroke="#000000" stroke-width="0.3" textLength="9.3" lengthAdjust="spacing">a</text><text x="1155.6" y="288.5" text-anchor="start" font-family="Liberation Sans" font-weight="bold" font-size="16.5" fill="#000000" stroke="#000000" stroke-width="0.3" textLength="20.7" lengthAdjust="spacing">R7</text><text x="1152" y="329.7" text-anchor="start" font-family="Liberation Sans" font-weight="bold" font-size="16.5" fill="#000000" stroke="#000000" stroke-width="0.3" textLength="28.3" lengthAdjust="spacing">220</text><text x="1237.8" y="288.5" text-anchor="start" font-family="Liberation Sans" font-weight="bold" font-size="16.5" fill="#000000" stroke="#000000" stroke-width="0.3" textLength="21" lengthAdjust="spacing">C3</text><text x="1228.3" y="329.4" text-anchor="start" font-family="Liberation Sans" font-weight="bold" font-size="16.5" fill="#000000" stroke="#000000" stroke-width="0.3" textLength="39.2" lengthAdjust="spacing">470n</text><text x="1308.5" y="288.5" text-anchor="start" font-family="Liberation Sans" font-weight="bold" font-size="16.5" fill="#000000" stroke="#000000" stroke-width="0.3" textLength="20.7" lengthAdjust="spacing">R1</text><text x="1299.8" y="329.4" text-anchor="start" font-family="Liberation Sans" font-weight="bold" font-size="16.5" fill="#000000" stroke="#000000" stroke-width="0.3" textLength="38.7" lengthAdjust="spacing">2200</text><text x="1455" y="244.8" text-anchor="start" font-family="Liberation Sans" font-weight="bold" font-size="16.5" fill="#000000" stroke="#000000" stroke-width="0.3" textLength="20.6" lengthAdjust="spacing">C2</text><text x="1446.2" y="285" text-anchor="start" font-family="Liberation Sans" font-weight="bold" font-size="16.5" fill="#000000" stroke="#000000" stroke-width="0.3" textLength="39.2" lengthAdjust="spacing">470n</text><text x="1559.6" y="244.8" text-anchor="start" font-family="Liberation Sans" font-weight="bold" font-size="16.5" fill="#000000" stroke="#000000" stroke-width="0.3" textLength="21.2" lengthAdjust="spacing">R4</text><text x="1556" y="285.6" text-anchor="start" font-family="Liberation Sans" font-weight="bold" font-size="16.5" fill="#000000" stroke="#000000" stroke-width="0.3" textLength="29" lengthAdjust="spacing">10k</text><text x="1647.7" y="244.8" text-anchor="start" font-family="Liberation Sans" font-weight="bold" font-size="16.5" fill="#000000" stroke="#000000" stroke-width="0.3" textLength="20.8" lengthAdjust="spacing">R5</text><text x="1643.5" y="285.6" text-anchor="start" font-family="Liberation Sans" font-weight="bold" font-size="16.5" fill="#000000" stroke="#000000" stroke-width="0.3" textLength="29.5" lengthAdjust="spacing">56k</text><text x="1718.8" y="265.4" text-anchor="start" font-family="Liberation Sans" font-weight="bold" font-size="16.5" fill="#000000" stroke="#000000" stroke-width="0.3" textLength="9.5" lengthAdjust="spacing">b</text><text x="1477.5" y="298" text-anchor="start" font-family="Liberation Sans" font-weight="bold" font-size="16.5" fill="#000000" stroke="#000000" stroke-width="0.3" textLength="20" lengthAdjust="spacing">U1</text><text x="1652.7" y="298.6" text-anchor="start" font-family="Liberation Sans" font-weight="bold" font-size="16.5" fill="#000000" stroke="#000000" stroke-width="0.3" textLength="20" lengthAdjust="spacing">U2</text><text x="1477.3" y="342.7" text-anchor="start" font-family="Liberation Sans" font-weight="bold" font-size="16.5" fill="#000000" stroke="#000000" stroke-width="0.3" textLength="93.7" lengthAdjust="spacing">LTC6244HV</text><text x="1652.7" y="342.7" text-anchor="start" font-family="Liberation Sans" font-weight="bold" font-size="16.5" fill="#000000" stroke="#000000" stroke-width="0.3" textLength="93.7" lengthAdjust="spacing">LTC6244HV</text><text x="1821.2" y="298.8" text-anchor="start" font-family="Liberation Sans" font-weight="bold" font-size="16.5" fill="#000000" stroke="#000000" stroke-width="0.3" textLength="19.6" lengthAdjust="spacing">V1</text><text x="1821.5" y="358.5" text-anchor="start" font-family="Liberation Sans" font-weight="bold" font-size="16.5" fill="#000000" stroke="#000000" stroke-width="0.3" textLength="9" lengthAdjust="spacing">5</text><text x="1821.2" y="374.2" text-anchor="start" font-family="Liberation Sans" font-weight="bold" font-size="16.5" fill="#000000" stroke="#000000" stroke-width="0.3" textLength="20" lengthAdjust="spacing">V2</text><text x="1821.5" y="433.8" text-anchor="start" font-family="Liberation Sans" font-weight="bold" font-size="16.5" fill="#000000" stroke="#000000" stroke-width="0.3" textLength="9" lengthAdjust="spacing">5</text><text x="1123.1" y="342.5" text-anchor="start" font-family="Liberation Sans" font-weight="bold" font-size="16.5" fill="#000000" stroke="#000000" stroke-width="0.3" textLength="20.2" lengthAdjust="spacing">V3</text><text x="1123.1" y="402.5" text-anchor="start" font-family="Liberation Sans" font-weight="bold" font-size="16.5" fill="#000000" stroke="#000000" stroke-width="0.3" textLength="187.3" lengthAdjust="spacing">SINE(0 .001 3 .1 0 0 .5)</text><text x="1308.7" y="386.3" text-anchor="start" font-family="Liberation Sans" font-weight="bold" font-size="16.5" fill="#000000" stroke="#000000" stroke-width="0.3" textLength="21" lengthAdjust="spacing">R2</text><text x="1299.8" y="427.3" text-anchor="start" font-family="Liberation Sans" font-weight="bold" font-size="16.5" fill="#000000" stroke="#000000" stroke-width="0.3" textLength="38.7" lengthAdjust="spacing">2200</text><text x="1275" y="451.3" text-anchor="start" font-family="Liberation Sans" font-weight="bold" font-size="16.5" fill="#000000" stroke="#000000" stroke-width="0.3" textLength="20.6" lengthAdjust="spacing">V5</text><text x="1427.9" y="413.3" text-anchor="start" font-family="Liberation Sans" font-weight="bold" font-size="16.5" fill="#000000" stroke="#000000" stroke-width="0.3" textLength="20.5" lengthAdjust="spacing">C1</text><text x="1428.5" y="445.4" text-anchor="start" font-family="Liberation Sans" font-weight="bold" font-size="16.5" fill="#000000" stroke="#000000" stroke-width="0.3" textLength="39.2" lengthAdjust="spacing">470n</text><text x="1559.6" y="463.3" text-anchor="start" font-family="Liberation Sans" font-weight="bold" font-size="16.5" fill="#000000" stroke="#000000" stroke-width="0.3" textLength="21.2" lengthAdjust="spacing">R6</text><text x="1550" y="504.6" text-anchor="start" font-family="Liberation Sans" font-weight="bold" font-size="16.5" fill="#000000" stroke="#000000" stroke-width="0.3" textLength="39.4" lengthAdjust="spacing">6800</text><text transform="translate(1362 350.4) rotate(-90)" text-anchor="middle" font-family="Liberation Sans" font-weight="bold" font-size="16.5" fill="#000000" stroke="#000000" stroke-width="0.3" textLength="59.2" lengthAdjust="spacing">MYSW1</text><text transform="translate(1417 330) rotate(-90)" text-anchor="middle" font-family="Liberation Sans" font-weight="bold" font-size="16.5" fill="#000000" stroke="#000000" stroke-width="0.3" textLength="17.5" lengthAdjust="spacing">S1</text><text transform="translate(1362 449.3) rotate(-90)" text-anchor="middle" font-family="Liberation Sans" font-weight="bold" font-size="16.5" fill="#000000" stroke="#000000" stroke-width="0.3" textLength="60.5" lengthAdjust="spacing">MYSW2</text><text transform="translate(1417 428.4) rotate(-90)" text-anchor="middle" font-family="Liberation Sans" font-weight="bold" font-size="16.5" fill="#000000" stroke="#000000" stroke-width="0.3" textLength="18.7" lengthAdjust="spacing">S2</text><text x="1054.7" y="544.2" text-anchor="start" font-family="Liberation Sans" font-weight="bold" font-size="16.5" fill="#000000" stroke="#000000" stroke-width="0.3" textLength="249.3" lengthAdjust="spacing">PULSE(0 1 800u 1n 1n 10u 1m)</text><text x="1352.5" y="533.75" text-anchor="start" font-family="Liberation Sans" font-weight="bold" font-size="16.5" fill="#000000" stroke="#000000" stroke-width="0.3" textLength="448" lengthAdjust="spacing">.model MYSW2 SW(Ron=1 Roff=100Meg Vt=.5 Vh=-.1)</text></svg></div></div><div style="position:absolute;left:2px;top:562px;width:958px;height:457px;overflow:hidden"><div style="position:absolute;left:0;top:0;width:956px;height:455px;border:1px solid #1e1e1e;border-radius:5px 5px 0 0;background:#b9d1ea"></div><div style="position:absolute;left:1px;top:1px;width:956px;height:31px;border-radius:4px 4px 0 0;background:linear-gradient(#99b4d1,#b9d1ea)"></div><div style="position:absolute;left:1px;top:1px;width:955px;height:454px;border-left:1px solid rgba(255,255,255,0.95);border-top:1px solid rgba(255,255,255,0.95);border-radius:4px 4px 0 0"></div><div style="position:absolute;left:956px;top:20px;width:1px;height:436px;background:#45c8ee"></div><div style="position:absolute;left:1px;top:455px;width:956px;height:1px;background:#45c8ee"></div><svg style="position:absolute;left:12px;top:10px" width="14" height="18" shape-rendering="crispEdges"><rect x="0" y="8" width="3" height="1" fill="#0000ff"/><rect x="3" y="4" width="2" height="9" fill="#0000ff"/></svg><svg style="position:absolute;left:12px;top:10px" width="14" height="18"><path d="M5 5.5 L10 0.5" stroke="#0000ff" stroke-width="1"/><path d="M5 10.5 L11 16.5" stroke="#0000ff" stroke-width="1"/><path d="M7 13.8 L11 16.5 L9.3 12.2 Z" fill="#0000ff" stroke="#0000ff" stroke-width="0.6"/></svg><div style="position:absolute;left:30px;top:13px;font:12px 'Liberation Sans', sans-serif;color:#000;white-space:pre;letter-spacing:-0.15px">MPP integ</div><div style="position:absolute;left:848px;top:10px;width:30px;height:16px;border:1px solid #4e6285;border-radius:3px;background:linear-gradient(#cadbef 0%, #bfd3ea 45%, #9fb9d8 52%, #a9c2df 75%, #b8d0ea 100%);box-shadow:inset 0 0 0 1px rgba(255,255,255,0.4)"></div><div style="position:absolute;left:882px;top:10px;width:30px;height:16px;border:1px solid #4e6285;border-radius:3px;background:linear-gradient(#cadbef 0%, #bfd3ea 45%, #9fb9d8 52%, #a9c2df 75%, #b8d0ea 100%);box-shadow:inset 0 0 0 1px rgba(255,255,255,0.4)"></div><div style="position:absolute;left:916px;top:10px;width:30px;height:16px;border:1px solid #4a1414;border-radius:3px;background:linear-gradient(#eaa997 0%, #df9580 40%, #c4452b 52%, #c9573c 75%, #db7e66 100%);box-shadow:inset 0 0 0 1px rgba(255,255,255,0.4)"></div><svg style="position:absolute;left:0;top:0" width="958" height="32"><rect x="858.5" y="18.5" width="10" height="4" rx="1" fill="#f6f6f6" stroke="#3a3a4a"/><rect x="892.5" y="14.5" width="10" height="8" rx="1" fill="#f6f6f6" stroke="#3a3a4a"/><rect x="895.5" y="17.5" width="4" height="2" fill="#8ea5c2" stroke="#3a3a4a"/><path d="M928 15.0 L936 22.0 M936 15.0 L928 22.0" stroke="#3a3a4a" stroke-width="4.4" stroke-linecap="round"/><path d="M928 15.0 L936 22.0 M936 15.0 L928 22.0" stroke="#f6f6f6" stroke-width="2.4" stroke-linecap="round"/></svg><div style="position:absolute;left:8px;top:31px;width:940px;height:416px;border-top:1px solid #a0a0a0;border-left:1px solid #a0a0a0;border-right:1px solid #fff;border-bottom:1px solid #fff"></div><div style="position:absolute;left:9px;top:32px;width:938px;height:414px;border-top:1px solid #696969;border-left:1px solid #696969;border-right:1px solid #e3e3e3;border-bottom:1px solid #e3e3e3"></div><div style="position:absolute;left:10px;top:33px;width:938px;height:414px;overflow:hidden"><svg style="position:absolute;left:0;top:0" width="938" height="414" viewBox="12 595 938 414"><rect x="12" y="595" width="938" height="414" fill="#c0c0c0"/><path d="M129.5 760.5 L184.5 760.5 M162.5 760.5 L162.5 727.5 M315.5 760.5 L315.5 727.5 M315.5 760.5 L315.5 792.5 L282.5 792.5 L282.5 814.5 M227.5 814.5 L206.5 814.5 L206.5 956.5 L304.5 956.5 M151.5 760.5 L151.5 792.5 M151.5 847.5 L151.5 869.5 M139.5 869.5 H163.5 M238.5 760.5 L271.5 760.5 M315.5 760.5 L337.5 760.5 M391.5 760.5 L391.5 672.5 L479.5 672.5 M533.5 672.5 L544.5 672.5 L544.5 716.5 M326.5 705.5 L326.5 716.5 M314.5 716.5 H338.5 M326.5 650.5 L413.5 650.5 L413.5 727.5 M391.5 760.5 L402.5 760.5 M446.5 727.5 L446.5 694.5 L457.5 694.5 L457.5 705.5 M445.5 705.5 H469.5 M457.5 760.5 L490.5 760.5 M479.5 760.5 L479.5 716.5 L490.5 716.5 M533.5 716.5 L588.5 716.5 M533.5 771.5 L544.5 771.5 L544.5 716.5 M511.5 749.5 L850.5 749.5 M511.5 792.5 L511.5 880.5 L850.5 880.5 M686.5 792.5 L686.5 880.5 M642.5 716.5 L675.5 716.5 M730.5 716.5 L763.5 716.5 M653.5 716.5 L653.5 760.5 L664.5 760.5 M664.5 781.5 L653.5 781.5 L653.5 803.5 M641.5 803.5 H665.5 M708.5 771.5 L741.5 771.5 M741.5 716.5 L741.5 934.5 L642.5 934.5 M588.5 934.5 L391.5 934.5 L391.5 858.5 M315.5 880.5 L315.5 858.5 L337.5 858.5 M303.5 880.5 H327.5 M391.5 858.5 L402.5 858.5 M446.5 825.5 L446.5 803.5 L457.5 803.5 L457.5 814.5 M445.5 814.5 H469.5 M304.5 902.5 L304.5 814.5 L413.5 814.5 L413.5 825.5 M304.5 956.5 L304.5 967.5 M292.5 967.5 H316.5 M457.5 858.5 L468.5 858.5 M468.5 858.5 L468.5 781.5 L490.5 781.5 M468.5 902.5 L468.5 912.5 M456.5 912.5 H480.5 M850.5 814.5 L806.5 814.5 L806.5 847.5 M794.5 847.5 H818.5" stroke="#0000ff" stroke-width="1" fill="none" stroke-linecap="square" shape-rendering="crispEdges"/><path d="M151.5 792 V798 M151.5 841.0 V847.5 M148.5 804.5 H155.5 M151.5 801.0 V808.0 M148.5 836.0 H155.5 M271.5 760.5 H290.5 M296.5 760.5 H315.5 M290.5 749 V772 M296.5 749 V772 M326.5 650 V656 M326.5 699.0 V705.5 M323.5 662.5 H330.5 M326.5 659.0 V666.0 M323.5 694.0 H330.5 M402 760.5 H416 M415.5 730.5 H422.5 M419.0 727 V734 M441.0 727 V734 M490.5 716.5 H509.5 M515.5 716.5 H533.5 M509.5 705 V728 M515.5 705 V728 M493 760.5 H500 M493 781.5 H500 M496.5 778.0 V785.0 M511.5 749.5 V760.5 M511.5 781.5 V792.5 M514.5 757.5 H521.5 M518.0 754.0 V761.0 M514.5 783.5 H521.5 M667 760.5 H674 M667 781.5 H674 M670.5 778.0 V785.0 M686.5 749.5 V760.5 M686.5 781.5 V792.5 M689.5 757.5 H696.5 M693.0 754.0 V761.0 M689.5 783.5 H696.5 M402 858.5 H416 M415.5 828.5 H422.5 M419.0 825 V832 M441.0 825 V832 M304.5 902 V908 M304.5 951.0 V956.5 M301.5 914.5 H308.5 M304.5 911.0 V918.0 M301.5 946.0 H308.5 M468.5 858.5 V877.5 M468.5 883.5 V902.5 M460 877.5 H480 M460 883.5 H480 M850.5 749.5 V763.5 M828 763.5 H872 M828 779 H872 M839 768.5 H861.5 V774 H839 Z M839 784.5 H861.5 V790 H839 Z M850.5 790 V814.5 M836 755.5 H843 M839.5 752 V759 M850.5 814.5 V839.5 M828 839.5 H872 M828 855 H872 M839 844.5 H861.5 V850 H839 Z M839 860.5 H861.5 V866 H839 Z M850.5 866 V880.5 M836 831.5 H843 M839.5 828 V835" stroke="#000080" stroke-width="1" fill="none" stroke-linecap="square" shape-rendering="crispEdges"/><g stroke="#000080" stroke-width="1.05" fill="none"><path d="M227.5 814.5 L232.6 814.5 L238.3 803.2 L249.5 825.8 L260.7 803.2 L271.4 825.8 L276.8 814.5 L282.5 814.5"/><circle cx="151.5" cy="819.5" r="21.3"/><path d="M135.5 821.5 C135.5 808.0 151.5 808.0 151.5 819.5 C151.5 831.0 168.5 831.0 168.5 818.5"/><path stroke="#0000ff" d="M139.5 869.5 L151.5 882.0 L163.5 869.5"/><path d="M184.5 760.5 L189.6 760.5 L195.3 749.2 L206.5 771.8 L217.7 749.2 L228.4 771.8 L233.8 760.5 L239.5 760.5"/><path d="M337.5 760.5 L342.6 760.5 L348.3 749.2 L359.5 771.8 L370.7 749.2 L381.4 771.8 L386.8 760.5 L392.5 760.5"/><path d="M479.5 672.5 L484.6 672.5 L490.3 661.2 L501.5 683.8 L512.7 661.2 L523.4 683.8 L528.8 672.5 L534.5 672.5"/><circle cx="326.5" cy="677.5" r="21.3"/><path d="M310.5 679.5 C310.5 666.0 326.5 666.0 326.5 677.5 C326.5 689.0 343.5 689.0 343.5 676.5"/><path stroke="#0000ff" d="M314.5 716.5 L326.5 729.0 L338.5 716.5"/><circle cx="429.5" cy="760.3" r="21"/><circle cx="418.3" cy="760.5" r="2.2"/><circle cx="426.6" cy="773.6" r="2.2"/><path d="M428.3 772.2 L443.4 760.5 L457.5 760.5"/><path d="M413.5 727.5 V738.5 L416.5 743"/><path d="M446.5 727.5 V738.5 L444.0 743"/><path stroke="#0000ff" d="M445.5 705.5 L457.5 718.0 L469.5 705.5"/><path d="M490.5 749.5 L490.5 792.5 L533.5 771.5 Z"/><path d="M588.5 716.5 L593.6 716.5 L599.3 705.2 L610.5 727.8 L621.7 705.2 L632.4 727.8 L637.8 716.5 L643.5 716.5"/><path d="M675.5 716.5 L680.6 716.5 L686.3 705.2 L697.5 727.8 L708.7 705.2 L719.4 727.8 L724.8 716.5 L730.5 716.5"/><path stroke="#0000ff" d="M641.5 803.5 L653.5 816.0 L665.5 803.5"/><path d="M664.5 749.5 L664.5 792.5 L708.5 771.5 Z"/><path d="M588.5 934.5 L593.6 934.5 L599.3 923.2 L610.5 945.8 L621.7 923.2 L632.4 945.8 L637.8 934.5 L643.5 934.5"/><path d="M337.5 858.5 L342.6 858.5 L348.3 847.2 L359.5 869.8 L370.7 847.2 L381.4 869.8 L386.8 858.5 L392.5 858.5"/><path stroke="#0000ff" d="M303.5 880.5 L315.5 893.0 L327.5 880.5"/><circle cx="429.5" cy="858.3" r="21"/><circle cx="418.3" cy="858.5" r="2.2"/><circle cx="426.6" cy="871.6" r="2.2"/><path d="M428.3 870.2 L443.4 858.5 L457.5 858.5"/><path d="M413.5 825.5 V836.5 L416.5 841"/><path d="M446.5 825.5 V836.5 L444.0 841"/><path stroke="#0000ff" d="M445.5 814.5 L457.5 827.0 L469.5 814.5"/><circle cx="304.5" cy="929.5" r="21.3"/><path d="M288.5 931.5 C288.5 918.0 304.5 918.0 304.5 929.5 C304.5 941.0 321.5 941.0 321.5 928.5"/><path stroke="#0000ff" d="M292.5 967.5 L304.5 980.0 L316.5 967.5"/><path stroke="#0000ff" d="M456.5 912.5 L468.5 925.0 L480.5 912.5"/><path stroke="#0000ff" d="M794.5 847.5 L806.5 860.0 L818.5 847.5"/></g><g fill="#0000ff" shape-rendering="crispEdges"><rect x="148" y="757" width="7" height="7"/><rect x="159" y="757" width="7" height="7"/><rect x="301" y="953" width="7" height="7"/><rect x="312" y="757" width="7" height="7"/><rect x="388" y="757" width="7" height="7"/><rect x="476" y="757" width="7" height="7"/><rect x="541" y="713" width="7" height="7"/><rect x="683" y="746" width="7" height="7"/><rect x="683" y="877" width="7" height="7"/><rect x="650" y="713" width="7" height="7"/><rect x="738" y="713" width="7" height="7"/><rect x="738" y="768" width="7" height="7"/><rect x="388" y="855" width="7" height="7"/><rect x="465" y="855" width="7" height="7"/><rect x="847" y="811" width="7" height="7"/></g><text x="371" y="617.8" text-anchor="start" font-family="Liberation Sans" font-weight="bold" font-size="16.5" fill="#000000" stroke="#000000" stroke-width="0.3" textLength="447.8" lengthAdjust="spacing">.model MYSW1 SW(Ron=1 Roff=100Meg Vt=.5 Vh=-.1)</text><text x="94" y="639.0" text-anchor="start" font-family="Liberation Sans" font-weight="bold" font-size="16.5" fill="#000000" stroke="#000000" stroke-width="0.3" textLength="241.2" lengthAdjust="spacing">PULSE(0 1 10u 1n 1n 10u 1m)</text><text x="123.59999999999991" y="679.0" text-anchor="start" font-family="Liberation Sans" font-weight="bold" font-size="16.5" fill="#0000c0" stroke="#0000c0" stroke-width="0.3" textLength="169.9" lengthAdjust="spacing">sample time=10usec</text><text x="342" y="656.9" text-anchor="start" font-family="Liberation Sans" font-weight="bold" font-size="16.5" fill="#000000" stroke="#000000" stroke-width="0.3" textLength="21" lengthAdjust="spacing">V4</text><text x="446" y="664.0" text-anchor="start" font-family="Liberation Sans" font-weight="bold" font-size="16.5" fill="#000000" stroke="#000000" stroke-width="0.3" textLength="40" lengthAdjust="spacing">6800</text><text x="496" y="658.2" text-anchor="start" font-family="Liberation Sans" font-weight="bold" font-size="16.5" fill="#000000" stroke="#000000" stroke-width="0.3" textLength="20.7" lengthAdjust="spacing">R3</text><text x="80.40000000000009" y="739.0" text-anchor="start" font-family="Liberation Sans" font-weight="bold" font-size="16.5" fill="#000000" stroke="#000000" stroke-width="0.3" textLength="55" lengthAdjust="spacing">.tran 1</text><text x="119.79999999999995" y="765.3" text-anchor="start" font-family="Liberation Sans" font-weight="bold" font-size="16.5" fill="#000000" stroke="#000000" stroke-width="0.3" textLength="9.3" lengthAdjust="spacing">a</text><text x="200.5999999999999" y="744.8" text-anchor="start" font-family="Liberation Sans" font-weight="bold" font-size="16.5" fill="#000000" stroke="#000000" stroke-width="0.3" textLength="20.7" lengthAdjust="spacing">R7</text><text x="197" y="786.0" text-anchor="start" font-family="Liberation Sans" font-weight="bold" font-size="16.5" fill="#000000" stroke="#000000" stroke-width="0.3" textLength="28.3" lengthAdjust="spacing">220</text><text x="282.79999999999995" y="744.8" text-anchor="start" font-family="Liberation Sans" font-weight="bold" font-size="16.5" fill="#000000" stroke="#000000" stroke-width="0.3" textLength="21" lengthAdjust="spacing">C3</text><text x="273.29999999999995" y="785.7" text-anchor="start" font-family="Liberation Sans" font-weight="bold" font-size="16.5" fill="#000000" stroke="#000000" stroke-width="0.3" textLength="39.2" lengthAdjust="spacing">470n</text><text x="353.5" y="744.8" text-anchor="start" font-family="Liberation Sans" font-weight="bold" font-size="16.5" fill="#000000" stroke="#000000" stroke-width="0.3" textLength="20.7" lengthAdjust="spacing">R1</text><text x="344.79999999999995" y="785.7" text-anchor="start" font-family="Liberation Sans" font-weight="bold" font-size="16.5" fill="#000000" stroke="#000000" stroke-width="0.3" textLength="38.7" lengthAdjust="spacing">2200</text><text x="500" y="701.1" text-anchor="start" font-family="Liberation Sans" font-weight="bold" font-size="16.5" fill="#000000" stroke="#000000" stroke-width="0.3" textLength="20.6" lengthAdjust="spacing">C2</text><text x="491.20000000000005" y="741.3" text-anchor="start" font-family="Liberation Sans" font-weight="bold" font-size="16.5" fill="#000000" stroke="#000000" stroke-width="0.3" textLength="39.2" lengthAdjust="spacing">470n</text><text x="604.5999999999999" y="701.1" text-anchor="start" font-family="Liberation Sans" font-weight="bold" font-size="16.5" fill="#000000" stroke="#000000" stroke-width="0.3" textLength="21.2" lengthAdjust="spacing">R4</text><text x="601" y="741.9000000000001" text-anchor="start" font-family="Liberation Sans" font-weight="bold" font-size="16.5" fill="#000000" stroke="#000000" stroke-width="0.3" textLength="29" lengthAdjust="spacing">10k</text><text x="692.7" y="701.1" text-anchor="start" font-family="Liberation Sans" font-weight="bold" font-size="16.5" fill="#000000" stroke="#000000" stroke-width="0.3" textLength="20.8" lengthAdjust="spacing">R5</text><text x="688.5" y="741.9000000000001" text-anchor="start" font-family="Liberation Sans" font-weight="bold" font-size="16.5" fill="#000000" stroke="#000000" stroke-width="0.3" textLength="29.5" lengthAdjust="spacing">56k</text><text x="763.8" y="721.7" text-anchor="start" font-family="Liberation Sans" font-weight="bold" font-size="16.5" fill="#000000" stroke="#000000" stroke-width="0.3" textLength="9.5" lengthAdjust="spacing">b</text><text x="522.5" y="754.3" text-anchor="start" font-family="Liberation Sans" font-weight="bold" font-size="16.5" fill="#000000" stroke="#000000" stroke-width="0.3" textLength="20" lengthAdjust="spacing">U1</text><text x="697.7" y="754.9000000000001" text-anchor="start" font-family="Liberation Sans" font-weight="bold" font-size="16.5" fill="#000000" stroke="#000000" stroke-width="0.3" textLength="20" lengthAdjust="spacing">U2</text><text x="522.3" y="799.0" text-anchor="start" font-family="Liberation Sans" font-weight="bold" font-size="16.5" fill="#000000" stroke="#000000" stroke-width="0.3" textLength="93.7" lengthAdjust="spacing">LTC6244HV</text><text x="697.7" y="799.0" text-anchor="start" font-family="Liberation Sans" font-weight="bold" font-size="16.5" fill="#000000" stroke="#000000" stroke-width="0.3" textLength="93.7" lengthAdjust="spacing">LTC6244HV</text><text x="866.2" y="755.1" text-anchor="start" font-family="Liberation Sans" font-weight="bold" font-size="16.5" fill="#000000" stroke="#000000" stroke-width="0.3" textLength="19.6" lengthAdjust="spacing">V1</text><text x="866.5" y="814.8" text-anchor="start" font-family="Liberation Sans" font-weight="bold" font-size="16.5" fill="#000000" stroke="#000000" stroke-width="0.3" textLength="9" lengthAdjust="spacing">5</text><text x="866.2" y="830.5" text-anchor="start" font-family="Liberation Sans" font-weight="bold" font-size="16.5" fill="#000000" stroke="#000000" stroke-width="0.3" textLength="20" lengthAdjust="spacing">V2</text><text x="866.5" y="890.1" text-anchor="start" font-family="Liberation Sans" font-weight="bold" font-size="16.5" fill="#000000" stroke="#000000" stroke-width="0.3" textLength="9" lengthAdjust="spacing">5</text><text x="168.0999999999999" y="798.8" text-anchor="start" font-family="Liberation Sans" font-weight="bold" font-size="16.5" fill="#000000" stroke="#000000" stroke-width="0.3" textLength="20.2" lengthAdjust="spacing">V3</text><text x="168.0999999999999" y="858.8" text-anchor="start" font-family="Liberation Sans" font-weight="bold" font-size="16.5" fill="#000000" stroke="#000000" stroke-width="0.3" textLength="187.3" lengthAdjust="spacing">SINE(0 .001 3 .1 0 0 .5)</text><text x="353.70000000000005" y="842.6" text-anchor="start" font-family="Liberation Sans" font-weight="bold" font-size="16.5" fill="#000000" stroke="#000000" stroke-width="0.3" textLength="21" lengthAdjust="spacing">R2</text><text x="344.79999999999995" y="883.6" text-anchor="start" font-family="Liberation Sans" font-weight="bold" font-size="16.5" fill="#000000" stroke="#000000" stroke-width="0.3" textLength="38.7" lengthAdjust="spacing">2200</text><text x="320" y="907.6" text-anchor="start" font-family="Liberation Sans" font-weight="bold" font-size="16.5" fill="#000000" stroke="#000000" stroke-width="0.3" textLength="20.6" lengthAdjust="spacing">V5</text><text x="472.9000000000001" y="869.6" text-anchor="start" font-family="Liberation Sans" font-weight="bold" font-size="16.5" fill="#000000" stroke="#000000" stroke-width="0.3" textLength="20.5" lengthAdjust="spacing">C1</text><text x="473.5" y="901.7" text-anchor="start" font-family="Liberation Sans" font-weight="bold" font-size="16.5" fill="#000000" stroke="#000000" stroke-width="0.3" textLength="39.2" lengthAdjust="spacing">470n</text><text x="604.5999999999999" y="919.6" text-anchor="start" font-family="Liberation Sans" font-weight="bold" font-size="16.5" fill="#000000" stroke="#000000" stroke-width="0.3" textLength="21.2" lengthAdjust="spacing">R6</text><text x="595" y="960.9000000000001" text-anchor="start" font-family="Liberation Sans" font-weight="bold" font-size="16.5" fill="#000000" stroke="#000000" stroke-width="0.3" textLength="39.4" lengthAdjust="spacing">6800</text><text transform="translate(407 806.7) rotate(-90)" text-anchor="middle" font-family="Liberation Sans" font-weight="bold" font-size="16.5" fill="#000000" stroke="#000000" stroke-width="0.3" textLength="59.2" lengthAdjust="spacing">MYSW1</text><text transform="translate(462 786.3) rotate(-90)" text-anchor="middle" font-family="Liberation Sans" font-weight="bold" font-size="16.5" fill="#000000" stroke="#000000" stroke-width="0.3" textLength="17.5" lengthAdjust="spacing">S1</text><text transform="translate(407 905.6) rotate(-90)" text-anchor="middle" font-family="Liberation Sans" font-weight="bold" font-size="16.5" fill="#000000" stroke="#000000" stroke-width="0.3" textLength="60.5" lengthAdjust="spacing">MYSW2</text><text transform="translate(462 884.7) rotate(-90)" text-anchor="middle" font-family="Liberation Sans" font-weight="bold" font-size="16.5" fill="#000000" stroke="#000000" stroke-width="0.3" textLength="18.7" lengthAdjust="spacing">S2</text><text x="99.70000000000005" y="1000.5" text-anchor="start" font-family="Liberation Sans" font-weight="bold" font-size="16.5" fill="#000000" stroke="#000000" stroke-width="0.3" textLength="249.3" lengthAdjust="spacing">PULSE(0 1 800u 1n 1n 10u 1m)</text><text x="397.5" y="990.05" text-anchor="start" font-family="Liberation Sans" font-weight="bold" font-size="16.5" fill="#000000" stroke="#000000" stroke-width="0.3" textLength="448" lengthAdjust="spacing">.model MYSW2 SW(Ron=1 Roff=100Meg Vt=.5 Vh=-.1)</text><text x="244.5999999999999" y="799.1" text-anchor="start" font-family="Liberation Sans" font-weight="bold" font-size="16.5" fill="#000000" stroke="#000000" stroke-width="0.3" textLength="21.2" lengthAdjust="spacing">R8</text><text x="241.29999999999995" y="840.1" text-anchor="start" font-family="Liberation Sans" font-weight="bold" font-size="16.5" fill="#000000" stroke="#000000" stroke-width="0.3" textLength="28.9" lengthAdjust="spacing">10k</text></svg></div></div><div style="position:absolute;left:960px;top:562px;width:958px;height:457px;overflow:hidden"><div style="position:absolute;left:0;top:0;width:956px;height:455px;border:1px solid #404040;border-radius:5px 5px 0 0;background:#d7e4f2"></div><div style="position:absolute;left:1px;top:1px;width:956px;height:31px;border-radius:4px 4px 0 0;background:linear-gradient(#bccbdb,#d7e4f2)"></div><div style="position:absolute;left:1px;top:1px;width:955px;height:454px;border-left:1px solid rgba(255,255,255,0.55);border-top:1px solid rgba(255,255,255,0.55);border-radius:4px 4px 0 0"></div><svg style="position:absolute;left:10px;top:11px" width="17" height="17" shape-rendering="crispEdges"><rect x="1" y="0" width="16" height="15" fill="#c0c0c0"/><rect x="3" y="7" width="3" height="1" fill="#ff0000"/><rect x="8" y="8" width="1" height="1" fill="#ff0000"/><rect x="11" y="8" width="2" height="1" fill="#ff0000"/><rect x="0" y="4" width="1" height="1" fill="#000"/><rect x="0" y="9" width="1" height="1" fill="#000"/><rect x="6" y="11" width="1" height="1" fill="#0000c0"/><rect x="12" y="11" width="1" height="1" fill="#0000c0"/><rect x="1" y="14" width="16" height="1" fill="#000"/><rect x="2" y="15" width="2" height="1" fill="#000"/><rect x="5" y="15" width="2" height="1" fill="#000"/><rect x="8" y="15" width="2" height="1" fill="#000"/><rect x="11" y="15" width="2" height="1" fill="#000"/><rect x="14" y="15" width="2" height="1" fill="#000"/></svg><svg style="position:absolute;left:10px;top:11px" width="17" height="17"><path d="M1 5 L4.5 1.5 L8 5 L11.5 1.5 L15.5 5" stroke="#0000ff" stroke-width="1.2" fill="none"/></svg><div style="position:absolute;left:30px;top:13px;font:12px 'Liberation Sans', sans-serif;color:#858b93;white-space:pre;letter-spacing:-0.15px">MPP integ</div><div style="position:absolute;left:848px;top:10px;width:30px;height:16px;border:1px solid #8d9cb6;border-radius:3px;background:linear-gradient(#cbd9e7 0%, #c6d5e4 50%, #c4d3e3 100%);box-shadow:inset 0 0 0 1px rgba(255,255,255,0.4)"></div><div style="position:absolute;left:882px;top:10px;width:30px;height:16px;border:1px solid #8d9cb6;border-radius:3px;background:linear-gradient(#cbd9e7 0%, #c6d5e4 50%, #c4d3e3 100%);box-shadow:inset 0 0 0 1px rgba(255,255,255,0.4)"></div><div style="position:absolute;left:916px;top:10px;width:30px;height:16px;border:1px solid #8d9cb6;border-radius:3px;background:linear-gradient(#cbd9e7 0%, #c6d5e4 50%, #c4d3e3 100%);box-shadow:inset 0 0 0 1px rgba(255,255,255,0.4)"></div><svg style="position:absolute;left:0;top:0" width="958" height="32"><rect x="858.5" y="18.5" width="10" height="4" rx="1" fill="#f6f6f6" stroke="#3a3a4a"/><rect x="892.5" y="14.5" width="10" height="8" rx="1" fill="#f6f6f6" stroke="#3a3a4a"/><rect x="895.5" y="17.5" width="4" height="2" fill="#8ea5c2" stroke="#3a3a4a"/><path d="M928 15.0 L936 22.0 M936 15.0 L928 22.0" stroke="#3a3a4a" stroke-width="4.4" stroke-linecap="round"/><path d="M928 15.0 L936 22.0 M936 15.0 L928 22.0" stroke="#f6f6f6" stroke-width="2.4" stroke-linecap="round"/></svg><div style="position:absolute;left:8px;top:31px;width:940px;height:416px;border-top:1px solid #a0a0a0;border-left:1px solid #a0a0a0;border-right:1px solid #fff;border-bottom:1px solid #fff"></div><div style="position:absolute;left:9px;top:32px;width:938px;height:414px;border-top:1px solid #696969;border-left:1px solid #696969;border-right:1px solid #e3e3e3;border-bottom:1px solid #e3e3e3"></div><div style="position:absolute;left:10px;top:33px;width:938px;height:414px;overflow:hidden"><svg style="position:absolute;left:0;top:0" width="938" height="414"><rect width="938" height="414" fill="#000"/><g shape-rendering="crispEdges"><line x1="52" y1="49.5" x2="926" y2="49.5" stroke="#989898" stroke-dasharray="3 3"/><line x1="52" y1="80.5" x2="926" y2="80.5" stroke="#989898" stroke-dasharray="3 3"/><line x1="52" y1="111.5" x2="926" y2="111.5" stroke="#989898" stroke-dasharray="3 3"/><line x1="52" y1="141.5" x2="926" y2="141.5" stroke="#989898" stroke-dasharray="3 3"/><line x1="52" y1="172.5" x2="926" y2="172.5" stroke="#989898" stroke-dasharray="3 3"/><line x1="52" y1="203.5" x2="926" y2="203.5" stroke="#989898" stroke-dasharray="3 3"/><line x1="52" y1="234.5" x2="926" y2="234.5" stroke="#989898" stroke-dasharray="3 3"/><line x1="52" y1="265.5" x2="926" y2="265.5" stroke="#989898" stroke-dasharray="3 3"/><line x1="52" y1="296.5" x2="926" y2="296.5" stroke="#989898" stroke-dasharray="3 3"/><line x1="52" y1="327.5" x2="926" y2="327.5" stroke="#989898" stroke-dasharray="3 3"/><line x1="52" y1="357.5" x2="926" y2="357.5" stroke="#989898" stroke-dasharray="3 3"/><line x1="139.5" y1="20" x2="139.5" y2="388" stroke="#989898" stroke-dasharray="3 3"/><line x1="226.5" y1="20" x2="226.5" y2="388" stroke="#989898" stroke-dasharray="3 3"/><line x1="314.5" y1="20" x2="314.5" y2="388" stroke="#989898" stroke-dasharray="3 3"/><line x1="401.5" y1="20" x2="401.5" y2="388" stroke="#989898" stroke-dasharray="3 3"/><line x1="489.5" y1="20" x2="489.5" y2="388" stroke="#989898" stroke-dasharray="3 3"/><line x1="576.5" y1="20" x2="576.5" y2="388" stroke="#989898" stroke-dasharray="3 3"/><line x1="664.5" y1="20" x2="664.5" y2="388" stroke="#989898" stroke-dasharray="3 3"/><line x1="751.5" y1="20" x2="751.5" y2="388" stroke="#989898" stroke-dasharray="3 3"/><line x1="839.5" y1="20" x2="839.5" y2="388" stroke="#989898" stroke-dasharray="3 3"/><rect x="51.5" y="18.5" width="875" height="370" fill="none" stroke="#c0c0c0"/><line x1="44" y1="18.5" x2="51" y2="18.5" stroke="#c0c0c0"/><line x1="44" y1="49.5" x2="51" y2="49.5" stroke="#c0c0c0"/><line x1="44" y1="80.5" x2="51" y2="80.5" stroke="#c0c0c0"/><line x1="44" y1="111.5" x2="51" y2="111.5" stroke="#c0c0c0"/><line x1="44" y1="141.5" x2="51" y2="141.5" stroke="#c0c0c0"/><line x1="44" y1="172.5" x2="51" y2="172.5" stroke="#c0c0c0"/><line x1="44" y1="203.5" x2="51" y2="203.5" stroke="#c0c0c0"/><line x1="44" y1="234.5" x2="51" y2="234.5" stroke="#c0c0c0"/><line x1="44" y1="265.5" x2="51" y2="265.5" stroke="#c0c0c0"/><line x1="44" y1="296.5" x2="51" y2="296.5" stroke="#c0c0c0"/><line x1="44" y1="327.5" x2="51" y2="327.5" stroke="#c0c0c0"/><line x1="44" y1="357.5" x2="51" y2="357.5" stroke="#c0c0c0"/><line x1="44" y1="388.5" x2="51" y2="388.5" stroke="#c0c0c0"/><line x1="51.5" y1="388" x2="51.5" y2="396" stroke="#c0c0c0"/><line x1="139.5" y1="388" x2="139.5" y2="396" stroke="#c0c0c0"/><line x1="226.5" y1="388" x2="226.5" y2="396" stroke="#c0c0c0"/><line x1="314.5" y1="388" x2="314.5" y2="396" stroke="#c0c0c0"/><line x1="401.5" y1="388" x2="401.5" y2="396" stroke="#c0c0c0"/><line x1="489.5" y1="388" x2="489.5" y2="396" stroke="#c0c0c0"/><line x1="576.5" y1="388" x2="576.5" y2="396" stroke="#c0c0c0"/><line x1="664.5" y1="388" x2="664.5" y2="396" stroke="#c0c0c0"/><line x1="751.5" y1="388" x2="751.5" y2="396" stroke="#c0c0c0"/><line x1="839.5" y1="388" x2="839.5" y2="396" stroke="#c0c0c0"/><line x1="926.5" y1="388" x2="926.5" y2="396" stroke="#c0c0c0"/></g><text x="42" y="23" text-anchor="end" font-family="Liberation Sans" font-weight="bold" font-size="13" fill="#c8c8c8" letter-spacing="-0.1">2.2mV</text><text x="42" y="54" text-anchor="end" font-family="Liberation Sans" font-weight="bold" font-size="13" fill="#c8c8c8" letter-spacing="-0.1">2.0mV</text><text x="42" y="85" text-anchor="end" font-family="Liberation Sans" font-weight="bold" font-size="13" fill="#c8c8c8" letter-spacing="-0.1">1.8mV</text><text x="42" y="116" text-anchor="end" font-family="Liberation Sans" font-weight="bold" font-size="13" fill="#c8c8c8" letter-spacing="-0.1">1.6mV</text><text x="42" y="146" text-anchor="end" font-family="Liberation Sans" font-weight="bold" font-size="13" fill="#c8c8c8" letter-spacing="-0.1">1.4mV</text><text x="42" y="177" text-anchor="end" font-family="Liberation Sans" font-weight="bold" font-size="13" fill="#c8c8c8" letter-spacing="-0.1">1.2mV</text><text x="42" y="208" text-anchor="end" font-family="Liberation Sans" font-weight="bold" font-size="13" fill="#c8c8c8" letter-spacing="-0.1">1.0mV</text><text x="42" y="239" text-anchor="end" font-family="Liberation Sans" font-weight="bold" font-size="13" fill="#c8c8c8" letter-spacing="-0.1">0.8mV</text><text x="42" y="270" text-anchor="end" font-family="Liberation Sans" font-weight="bold" font-size="13" fill="#c8c8c8" letter-spacing="-0.1">0.6mV</text><text x="42" y="301" text-anchor="end" font-family="Liberation Sans" font-weight="bold" font-size="13" fill="#c8c8c8" letter-spacing="-0.1">0.4mV</text><text x="42" y="332" text-anchor="end" font-family="Liberation Sans" font-weight="bold" font-size="13" fill="#c8c8c8" letter-spacing="-0.1">0.2mV</text><text x="42" y="362" text-anchor="end" font-family="Liberation Sans" font-weight="bold" font-size="13" fill="#c8c8c8" letter-spacing="-0.1">0.0mV</text><text x="42" y="393" text-anchor="end" font-family="Liberation Sans" font-weight="bold" font-size="13" fill="#c8c8c8" letter-spacing="-0.1">-0.2mV</text><text x="51.5" y="409" text-anchor="middle" font-family="Liberation Sans" font-weight="bold" font-size="13" fill="#c8c8c8" letter-spacing="-0.1">0.0s</text><text x="139.5" y="409" text-anchor="middle" font-family="Liberation Sans" font-weight="bold" font-size="13" fill="#c8c8c8" letter-spacing="-0.1">0.1s</text><text x="226.5" y="409" text-anchor="middle" font-family="Liberation Sans" font-weight="bold" font-size="13" fill="#c8c8c8" letter-spacing="-0.1">0.2s</text><text x="314.5" y="409" text-anchor="middle" font-family="Liberation Sans" font-weight="bold" font-size="13" fill="#c8c8c8" letter-spacing="-0.1">0.3s</text><text x="401.5" y="409" text-anchor="middle" font-family="Liberation Sans" font-weight="bold" font-size="13" fill="#c8c8c8" letter-spacing="-0.1">0.4s</text><text x="489.5" y="409" text-anchor="middle" font-family="Liberation Sans" font-weight="bold" font-size="13" fill="#c8c8c8" letter-spacing="-0.1">0.5s</text><text x="576.5" y="409" text-anchor="middle" font-family="Liberation Sans" font-weight="bold" font-size="13" fill="#c8c8c8" letter-spacing="-0.1">0.6s</text><text x="664.5" y="409" text-anchor="middle" font-family="Liberation Sans" font-weight="bold" font-size="13" fill="#c8c8c8" letter-spacing="-0.1">0.7s</text><text x="751.5" y="409" text-anchor="middle" font-family="Liberation Sans" font-weight="bold" font-size="13" fill="#c8c8c8" letter-spacing="-0.1">0.8s</text><text x="839.5" y="409" text-anchor="middle" font-family="Liberation Sans" font-weight="bold" font-size="13" fill="#c8c8c8" letter-spacing="-0.1">0.9s</text><text x="926.5" y="409" text-anchor="middle" font-family="Liberation Sans" font-weight="bold" font-size="13" fill="#c8c8c8" letter-spacing="-0.1">1.0s</text><text x="268.5" y="13" text-anchor="middle" font-family="Liberation Sans" font-weight="bold" font-size="13" fill="#00ff00">V(a)</text><text x="705.5" y="13" text-anchor="middle" font-family="Liberation Sans" font-weight="bold" font-size="13" fill="#0000ff">V(b)</text><polyline points="51.50,357.50 139.00,357.50 140.82,351.44 142.65,345.39 144.47,339.36 146.29,333.35 148.11,327.38 149.94,321.46 151.76,315.60 153.58,309.80 155.41,304.07 157.23,298.42 159.05,292.87 160.88,287.42 162.70,282.07 164.52,276.84 166.34,271.73 168.17,266.76 169.99,261.93 171.81,257.24 173.64,252.71 175.46,248.34 177.28,244.14 179.10,240.11 180.93,236.27 182.75,232.61 184.57,229.14 186.40,225.87 188.22,222.81 190.04,219.95 191.86,217.31 193.69,214.88 195.51,212.67 197.33,210.68 199.16,208.92 200.98,207.39 202.80,206.09 204.62,205.03 206.45,204.20 208.27,203.60 210.09,203.24 211.92,203.12 213.74,203.24 215.56,203.60 217.39,204.20 219.21,205.03 221.03,206.09 222.85,207.39 224.68,208.92 226.50,210.68 228.32,212.67 230.15,214.88 231.97,217.31 233.79,219.95 235.61,222.81 237.44,225.87 239.26,229.14 241.08,232.61 242.91,236.27 244.73,240.11 246.55,244.14 248.38,248.34 250.20,252.71 252.02,257.24 253.84,261.93 255.67,266.76 257.49,271.73 259.31,276.84 261.14,282.07 262.96,287.42 264.78,292.87 266.60,298.42 268.43,304.07 270.25,309.80 272.07,315.60 273.90,321.46 275.72,327.38 277.54,333.35 279.36,339.36 281.19,345.39 283.01,351.44 284.83,357.50 284.83,357.50 532.49,357.50" fill="none" stroke="#00ff00" stroke-width="1" stroke-linejoin="round" shape-rendering="crispEdges"/><polyline points="51.50,357.50 139.50,357.50" fill="none" stroke="#0000ff" stroke-width="1" stroke-linejoin="round" shape-rendering="crispEdges"/><polyline points="139.50,357.47 141.00,356.95 142.50,355.93 144.00,354.47 145.50,352.59 147.00,350.33 148.50,347.71 150.00,344.71 151.50,341.37 153.00,337.69 154.50,333.75 156.00,329.47 157.50,324.91 159.00,320.14 160.50,315.07 162.00,309.76 163.50,304.24 165.00,298.57 166.50,292.66 168.00,286.58 169.50,280.41 171.00,274.03 172.50,267.52 174.00,260.90 175.50,254.25 177.00,247.45 178.50,240.57 180.00,233.72 181.50,226.75 183.00,219.75 184.50,212.81 186.00,205.79 187.50,198.78 189.00,191.80 190.50,184.92 192.00,178.02 193.50,171.18 195.00,164.40 196.50,157.79 198.00,151.20 199.50,144.71 201.00,138.41 202.50,132.16 204.00,126.05 205.50,120.15 207.00,114.35 208.50,108.70 210.00,103.23 211.50,98.01 213.00,92.92 214.50,88.02 216.00,83.34 217.50,78.92 219.00,74.67 220.50,70.65 222.00,66.91 223.50,63.36 225.00,60.06 226.50,57.02 228.00,54.26 229.50,51.74 231.00,49.48 232.50,47.52 234.00,45.80 235.50,44.37 237.00,43.23 238.50,42.36 240.00,41.77 241.50,41.26 243.00,41.04" fill="none" stroke="#0000ff" stroke-width="2" stroke-linejoin="round"/><polyline points="243.00,41.04 244.50,41.11 246.00,41.47 247.50,42.13 249.00,43.07 250.50,44.32 252.00,45.86 253.50,47.67 255.00,49.80 256.50,52.22 258.00,54.89 259.50,57.89 261.00,61.17 262.50,64.74 264.00,68.55 265.50,72.67 267.00,77.08 268.50,81.70 270.00,86.64 271.50,91.84 273.00,97.30 274.50,102.95 276.00,108.91 277.50,115.11 279.00,121.55 280.50,128.14 282.00,135.03 283.50,142.14 285.00,149.37 286.50,156.62 288.00,163.61 289.50,170.35 291.00,176.79 292.50,183.08 294.00,189.15 295.50,194.94 297.00,200.60 298.50,206.06 300.00,211.27 301.50,216.36 303.00,221.27 304.50,226.01 306.00,230.53 307.50,234.95 309.00,239.22 310.50,243.29 312.00,247.26 313.50,251.10 315.00,254.80 316.50,258.33 318.00,261.78 319.50,265.11 321.00,268.29 322.50,271.40 324.00,274.39 325.50,277.28 327.00,280.04 328.50,282.74 330.00,285.34 331.50,287.82 333.00,290.25 334.50,292.59 336.00,294.85 337.50,297.00 339.00,299.11 340.50,301.14 342.00,303.10 343.50,304.97 345.00,306.80 346.50,308.57 348.00,310.25 349.50,311.89 351.00,313.48 352.50,314.99 354.00,316.47 355.50,317.90 357.00,319.28 358.50,320.59 360.00,321.88 361.50,323.12 363.00,324.30 364.50,325.46 366.00,326.57 367.50,327.65 369.00,328.67 370.50,329.68 372.00,330.65 373.50,331.58 375.00,332.47 376.50,333.34 378.00,334.18 379.50,334.99 381.00,335.77 382.50,336.53 384.00,337.26 385.50,337.95 387.00,338.63 388.50,339.29 390.00,339.92 391.50,340.53 393.00,341.12 394.50,341.69 396.00,342.23 397.50,342.76 399.00,343.28 400.50,343.77 402.00,344.24 403.50,344.70 405.00,345.15 406.50,345.57 408.00,345.99 409.50,346.39 411.00,346.77 412.50,347.15 414.00,347.51 415.50,347.85 417.00,348.19 418.50,348.51 420.00,348.82 421.50,349.12 423.00,349.41 424.50,349.69 426.00,349.96 427.50,350.22 429.00,350.48 430.50,350.72 432.00,350.96 433.50,351.18 435.00,351.40 436.50,351.62 438.00,351.82 439.50,352.02 441.00,352.21 442.50,352.39 444.00,352.57 445.50,352.74 447.00,352.90 448.50,353.06 450.00,353.22 451.50,353.37 453.00,353.51 454.50,353.65 456.00,353.78 457.50,353.91 459.00,354.03 460.50,354.15 462.00,354.27 463.50,354.38 465.00,354.49 466.50,354.59 468.00,354.69 469.50,354.79 471.00,354.89 472.50,354.98 474.00,355.06 475.50,355.15 477.00,355.23 478.50,355.31 480.00,355.39 481.50,355.46 483.00,355.53 484.50,355.60 486.00,355.66 487.50,355.73 489.00,355.79 490.50,355.85 492.00,355.91 493.50,355.96 495.00,356.01 496.50,356.07 498.00,356.12 499.50,356.16 501.00,356.21 502.50,356.25 504.00,356.30 505.50,356.34 507.00,356.38 508.50,356.42 510.00,356.46 511.50,356.49 513.00,356.53 514.50,356.56 516.00,356.59 517.50,356.63 519.00,356.66 520.50,356.68 522.00,356.71 523.50,356.74 525.00,356.77 526.50,356.79 528.00,356.82 529.50,356.84 531.00,356.86 532.50,356.89 534.00,356.91 535.50,356.93 537.00,356.95 538.50,356.97 540.00,356.98 541.50,357.00 543.00,357.02 544.50,357.04 546.00,357.05 547.50,357.07 549.00,357.08 550.50,357.10 552.00,357.11 553.50,357.13 555.00,357.14 556.50,357.15 558.00,357.16 559.50,357.17 561.00,357.19 562.50,357.20 564.00,357.21 565.50,357.22 567.00,357.23 568.50,357.24 570.00,357.25" fill="none" stroke="#0000ff" stroke-width="1.2" stroke-linejoin="round"/><polyline points="570.00,357.50 926.00,357.50" fill="none" stroke="#0000ff" stroke-width="1" stroke-linejoin="round" shape-rendering="crispEdges"/></svg></div></div><div style="position:absolute;left:0;top:1019px;width:1920px;height:1px;background:#fff"></div><div style="position:absolute;left:0;top:1020px;width:1920px;height:20px;background:#f0f0f0"></div><div style="position:absolute;left:0;top:1020px;width:1920px;height:1px;background:#dedede"></div></body></html>
